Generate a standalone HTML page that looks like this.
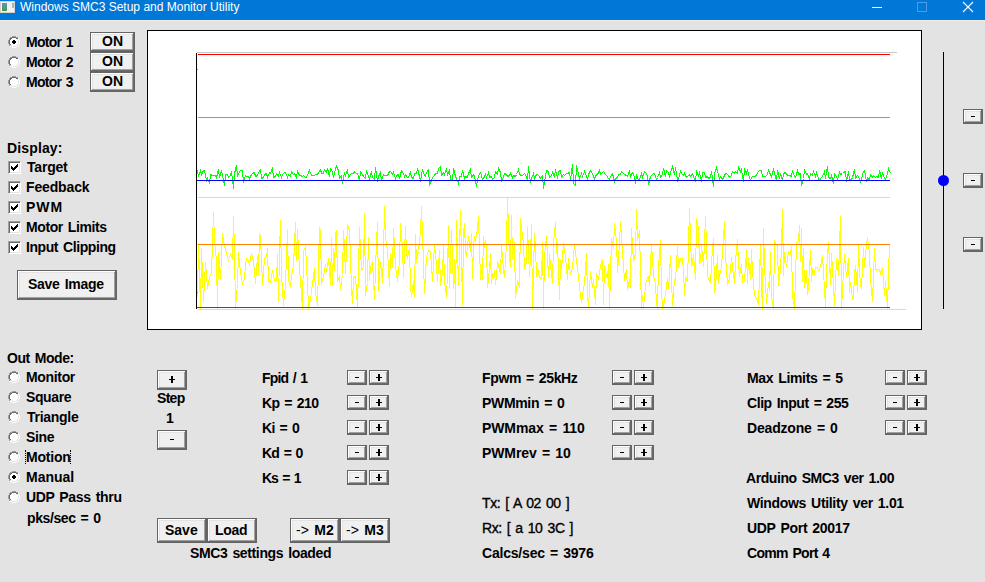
<!DOCTYPE html>
<html><head><meta charset="utf-8"><style>
html,body{margin:0;padding:0}
body{width:985px;height:582px;overflow:hidden;position:relative;background:#e3e3e3;font-family:"Liberation Sans",sans-serif}
#title{position:absolute;left:0;top:0;width:985px;height:20px;background:#0078d7}
#tline{position:absolute;left:0;top:20px;width:985px;height:1px;background:#f0ebe7}
#icon{position:absolute;left:0;top:1px;width:15px;height:12px;background:#f2f2f2;box-shadow:inset 0 0 0 1px #d9d2cc}
#icon .i1{position:absolute;left:2px;top:2px;width:5px;height:8px;background:linear-gradient(#6a8fb8,#3fa04a)}
#icon .i3{position:absolute;left:12px;top:2px;width:2px;height:5px;background:linear-gradient(#8fb0d8,#9cd09c)}
.t{position:absolute;white-space:nowrap;font-size:14px;line-height:14px;color:#000;word-spacing:1.5px}
.b{position:absolute;box-sizing:border-box;background:#f0f0f0;border:1px solid #646464;box-shadow:inset -1px -1px 0 #696969,inset 1px 1px 0 #fff,inset -2px -2px 0 #a0a0a0,inset 2px 2px 0 #e3e3e3}
.g{position:absolute;background:#000}
.b.thin{box-shadow:inset 1px 1px 0 #fff,inset -1px -1px 0 #8e8e8e}
.b span{display:block;line-height:13px}
.b.sm{font-size:12px}
.rd{position:absolute}
.cb{position:absolute;width:13px;height:13px;box-sizing:border-box;background:#fff;border-top:1px solid #a0a0a0;border-left:1px solid #a0a0a0;border-right:1px solid #fff;border-bottom:1px solid #fff;box-shadow:inset 1px 1px 0 #696969,inset -1px -1px 0 #e3e3e3}
</style></head><body>
<svg id="chart" width="985" height="582" style="position:absolute;left:0;top:0" shape-rendering="crispEdges">
<rect x="147.5" y="30.5" width="774" height="299" fill="#fff" stroke="#000" stroke-width="1"/>
<line x1="197" y1="52.5" x2="897" y2="52.5" stroke="#c8c8c8"/>
<line x1="198" y1="197.5" x2="890" y2="197.5" stroke="#d8d8d8"/>
<line x1="198" y1="309.5" x2="906" y2="309.5" stroke="#d8d8d8"/>
<polyline points="197.5,297.5 198.5,243.5 199.5,274.5 200.5,308.5 201.5,248.5 203.5,301.5 205.5,262.5 207.5,288.5 209.5,277.5 211.5,272.5 213.5,212.5 214.5,241.5 216.5,260.5 217.5,308.5 218.5,252.5 220.5,279.5 222.5,233.5 224.5,245.5 226.5,253.5 228.5,260.5 230.5,254.5 232.5,259.5 233.5,216.5 234.5,250.5 235.5,308.5 237.5,283.5 238.5,252.5 240.5,272.5 242.5,283.5 244.5,278.5 245.5,263.5 246.5,258.5 248.5,260.5 249.5,265.5 251.5,253.5 253.5,261.5 255.5,283.5 257.5,256.5 258.5,274.5 259.5,233.5 260.5,236.5 262.5,284.5 264.5,258.5 266.5,257.5 267.5,248.5 268.5,281.5 270.5,282.5 272.5,270.5 274.5,280.5 276.5,280.5 277.5,254.5 278.5,301.5 279.5,252.5 280.5,220.5 281.5,274.5 283.5,305.5 285.5,284.5 287.5,229.5 288.5,280.5 290.5,287.5 291.5,275.5 293.5,265.5 295.5,222.5 296.5,260.5 297.5,229.5 299.5,269.5 300.5,280.5 302.5,308.5 303.5,251.5 305.5,246.5 307.5,283.5 308.5,308.5 310.5,299.5 312.5,283.5 314.5,268.5 315.5,292.5 317.5,305.5 319.5,227.5 320.5,230.5 321.5,284.5 323.5,275.5 325.5,264.5 326.5,271.5 328.5,258.5 330.5,284.5 331.5,238.5 332.5,285.5 333.5,248.5 334.5,270.5 335.5,234.5 336.5,230.5 337.5,281.5 339.5,275.5 340.5,289.5 342.5,274.5 343.5,230.5 344.5,247.5 345.5,273.5 347.5,224.5 349.5,230.5 351.5,287.5 352.5,303.5 353.5,277.5 355.5,276.5 357.5,307.5 359.5,227.5 361.5,270.5 363.5,267.5 364.5,213.5 365.5,295.5 367.5,282.5 368.5,237.5 369.5,280.5 370.5,267.5 372.5,261.5 374.5,299.5 376.5,241.5 377.5,222.5 378.5,290.5 380.5,261.5 382.5,283.5 383.5,253.5 384.5,206.5 385.5,237.5 387.5,250.5 388.5,268.5 389.5,286.5 390.5,253.5 392.5,267.5 393.5,228.5 395.5,266.5 397.5,281.5 399.5,261.5 400.5,223.5 402.5,247.5 403.5,277.5 405.5,226.5 406.5,253.5 407.5,258.5 408.5,252.5 409.5,247.5 410.5,286.5 411.5,296.5 413.5,281.5 414.5,297.5 415.5,234.5 416.5,262.5 418.5,250.5 420.5,231.5 421.5,206.5 423.5,263.5 424.5,293.5 426.5,256.5 428.5,250.5 430.5,251.5 432.5,281.5 434.5,244.5 436.5,265.5 437.5,281.5 439.5,250.5 440.5,285.5 442.5,273.5 443.5,244.5 444.5,280.5 446.5,297.5 447.5,272.5 448.5,225.5 449.5,288.5 451.5,230.5 453.5,288.5 454.5,259.5 455.5,307.5 456.5,220.5 458.5,285.5 460.5,210.5 462.5,304.5 463.5,233.5 464.5,223.5 465.5,252.5 466.5,256.5 468.5,236.5 470.5,251.5 471.5,233.5 472.5,278.5 473.5,245.5 474.5,236.5 475.5,241.5 477.5,227.5 478.5,216.5 480.5,279.5 481.5,269.5 482.5,279.5 483.5,236.5 484.5,247.5 485.5,240.5 486.5,246.5 487.5,287.5 489.5,268.5 490.5,253.5 491.5,283.5 492.5,274.5 493.5,276.5 494.5,270.5 495.5,284.5 496.5,276.5 497.5,261.5 498.5,265.5 500.5,273.5 501.5,244.5 503.5,269.5 504.5,277.5 506.5,242.5 507.5,198.5 509.5,258.5 510.5,266.5 511.5,215.5 512.5,258.5 514.5,241.5 515.5,298.5 517.5,280.5 519.5,287.5 520.5,218.5 521.5,228.5 523.5,243.5 524.5,269.5 526.5,261.5 527.5,227.5 529.5,276.5 530.5,254.5 531.5,224.5 532.5,308.5 534.5,233.5 535.5,247.5 536.5,276.5 537.5,267.5 539.5,277.5 541.5,278.5 542.5,242.5 543.5,308.5 544.5,256.5 546.5,236.5 548.5,277.5 549.5,254.5 550.5,263.5 552.5,283.5 553.5,242.5 555.5,222.5 556.5,252.5 557.5,242.5 559.5,299.5 560.5,260.5 561.5,269.5 563.5,243.5 565.5,256.5 566.5,268.5 567.5,279.5 568.5,258.5 570.5,274.5 572.5,267.5 574.5,244.5 575.5,252.5 577.5,268.5 579.5,286.5 581.5,302.5 583.5,288.5 584.5,283.5 586.5,253.5 587.5,294.5 588.5,307.5 590.5,271.5 592.5,287.5 593.5,279.5 595.5,304.5 596.5,273.5 598.5,279.5 600.5,265.5 602.5,259.5 603.5,304.5 604.5,265.5 606.5,275.5 607.5,278.5 608.5,264.5 609.5,308.5 610.5,274.5 611.5,238.5 613.5,248.5 614.5,223.5 616.5,241.5 617.5,272.5 619.5,242.5 620.5,221.5 622.5,251.5 624.5,280.5 626.5,269.5 627.5,289.5 629.5,279.5 630.5,287.5 631.5,228.5 633.5,261.5 635.5,253.5 636.5,209.5 637.5,240.5 639.5,230.5 641.5,308.5 642.5,295.5 643.5,308.5 645.5,285.5 646.5,279.5 648.5,276.5 649.5,285.5 651.5,244.5 653.5,275.5 655.5,283.5 656.5,303.5 657.5,308.5 658.5,265.5 660.5,240.5 661.5,289.5 662.5,308.5 664.5,300.5 666.5,286.5 667.5,278.5 668.5,288.5 669.5,273.5 670.5,255.5 672.5,305.5 674.5,279.5 675.5,280.5 677.5,246.5 678.5,266.5 680.5,258.5 682.5,258.5 683.5,270.5 684.5,295.5 685.5,277.5 687.5,281.5 689.5,208.5 691.5,266.5 692.5,262.5 693.5,254.5 695.5,279.5 696.5,218.5 698.5,228.5 699.5,263.5 700.5,261.5 701.5,245.5 703.5,266.5 705.5,216.5 707.5,274.5 708.5,279.5 710.5,282.5 711.5,265.5 712.5,247.5 713.5,238.5 714.5,292.5 715.5,287.5 717.5,255.5 718.5,283.5 719.5,273.5 720.5,273.5 722.5,254.5 724.5,221.5 725.5,255.5 727.5,283.5 729.5,279.5 731.5,257.5 732.5,266.5 734.5,283.5 735.5,260.5 737.5,239.5 738.5,262.5 739.5,276.5 741.5,264.5 742.5,282.5 744.5,280.5 746.5,250.5 747.5,283.5 748.5,257.5 750.5,279.5 751.5,249.5 752.5,272.5 754.5,295.5 756.5,298.5 758.5,304.5 760.5,244.5 761.5,286.5 762.5,308.5 763.5,228.5 764.5,267.5 765.5,284.5 766.5,303.5 768.5,282.5 769.5,290.5 770.5,251.5 771.5,297.5 773.5,308.5 774.5,240.5 775.5,244.5 777.5,245.5 778.5,285.5 780.5,268.5 781.5,248.5 782.5,209.5 783.5,275.5 784.5,252.5 786.5,266.5 788.5,251.5 790.5,254.5 791.5,246.5 792.5,295.5 794.5,308.5 796.5,242.5 798.5,241.5 799.5,225.5 800.5,261.5 801.5,228.5 802.5,281.5 803.5,248.5 804.5,287.5 806.5,270.5 807.5,294.5 808.5,287.5 810.5,250.5 811.5,281.5 812.5,269.5 814.5,273.5 815.5,267.5 817.5,267.5 818.5,270.5 820.5,267.5 822.5,255.5 823.5,271.5 825.5,306.5 826.5,270.5 828.5,242.5 830.5,284.5 831.5,253.5 832.5,268.5 834.5,305.5 836.5,258.5 838.5,275.5 840.5,216.5 841.5,308.5 843.5,272.5 844.5,254.5 846.5,276.5 848.5,258.5 849.5,292.5 850.5,282.5 852.5,299.5 853.5,298.5 854.5,272.5 855.5,265.5 857.5,291.5 858.5,244.5 859.5,271.5 860.5,284.5 861.5,288.5 863.5,247.5 864.5,266.5 865.5,253.5 867.5,237.5 869.5,253.5 870.5,279.5 872.5,301.5 874.5,248.5 875.5,268.5 876.5,270.5 877.5,269.5 879.5,269.5 880.5,273.5 882.5,267.5 884.5,295.5 885.5,281.5 887.5,308.5 888.5,272.5 889.5,245.5" fill="none" stroke="#ffff00" stroke-width="1"/>
<line x1="198" y1="54.5" x2="890" y2="54.5" stroke="#ff0000"/>
<line x1="198" y1="117.5" x2="890" y2="117.5" stroke="#ff8000"/>
<line x1="198" y1="244.5" x2="890" y2="244.5" stroke="#ff8000"/>
<line x1="197" y1="307.5" x2="890" y2="307.5" stroke="#ff0000"/>
<polyline points="197.5,170.5 198.5,176.5 200.5,170.5 201.5,174.5 203.5,170.5 204.5,170.5 206.5,180.5 207.5,178.5 209.5,183.5 210.5,174.5 212.5,175.5 213.5,175.5 215.5,175.5 216.5,177.5 218.5,169.5 219.5,177.5 221.5,170.5 222.5,175.5 224.5,185.5 225.5,174.5 227.5,174.5 228.5,177.5 230.5,175.5 231.5,171.5 233.5,188.5 234.5,173.5 236.5,165.5 237.5,176.5 239.5,171.5 240.5,170.5 242.5,170.5 243.5,182.5 245.5,175.5 246.5,176.5 248.5,176.5 249.5,178.5 251.5,174.5 252.5,173.5 254.5,172.5 255.5,176.5 257.5,175.5 258.5,172.5 260.5,169.5 261.5,178.5 263.5,177.5 264.5,174.5 266.5,173.5 267.5,177.5 269.5,172.5 270.5,173.5 272.5,167.5 273.5,177.5 275.5,176.5 276.5,173.5 278.5,176.5 279.5,172.5 281.5,177.5 282.5,174.5 284.5,172.5 285.5,172.5 287.5,177.5 288.5,174.5 290.5,176.5 291.5,171.5 293.5,174.5 294.5,173.5 296.5,177.5 297.5,171.5 299.5,175.5 300.5,175.5 302.5,176.5 303.5,175.5 305.5,177.5 306.5,177.5 308.5,172.5 309.5,170.5 311.5,175.5 312.5,175.5 314.5,175.5 315.5,174.5 317.5,174.5 318.5,172.5 320.5,169.5 321.5,173.5 323.5,173.5 324.5,169.5 326.5,172.5 327.5,168.5 329.5,176.5 330.5,168.5 332.5,171.5 333.5,177.5 335.5,168.5 336.5,166.5 338.5,170.5 339.5,178.5 341.5,175.5 342.5,183.5 344.5,172.5 345.5,175.5 347.5,169.5 348.5,177.5 350.5,174.5 351.5,173.5 353.5,173.5 354.5,171.5 356.5,173.5 357.5,173.5 359.5,180.5 360.5,171.5 362.5,174.5 363.5,176.5 365.5,178.5 366.5,170.5 368.5,176.5 369.5,178.5 371.5,171.5 372.5,177.5 374.5,179.5 375.5,167.5 377.5,181.5 378.5,176.5 380.5,172.5 381.5,180.5 383.5,174.5 384.5,175.5 386.5,175.5 387.5,175.5 389.5,171.5 390.5,171.5 392.5,174.5 393.5,172.5 395.5,178.5 396.5,175.5 398.5,174.5 399.5,178.5 401.5,170.5 402.5,171.5 404.5,176.5 405.5,174.5 407.5,177.5 408.5,177.5 410.5,171.5 411.5,177.5 413.5,178.5 414.5,173.5 416.5,173.5 417.5,168.5 419.5,176.5 420.5,181.5 422.5,169.5 423.5,173.5 425.5,176.5 426.5,172.5 428.5,169.5 429.5,184.5 431.5,180.5 432.5,177.5 434.5,175.5 435.5,173.5 437.5,173.5 438.5,168.5 440.5,166.5 441.5,175.5 443.5,172.5 444.5,174.5 446.5,168.5 447.5,174.5 449.5,170.5 450.5,179.5 452.5,180.5 453.5,168.5 455.5,176.5 456.5,178.5 458.5,183.5 459.5,176.5 461.5,176.5 462.5,170.5 464.5,178.5 465.5,176.5 467.5,177.5 468.5,173.5 470.5,169.5 471.5,177.5 473.5,174.5 474.5,176.5 476.5,186.5 477.5,179.5 479.5,173.5 480.5,172.5 482.5,179.5 483.5,178.5 485.5,174.5 486.5,177.5 488.5,172.5 489.5,177.5 491.5,176.5 492.5,179.5 494.5,177.5 495.5,171.5 497.5,174.5 498.5,168.5 500.5,172.5 501.5,181.5 503.5,176.5 504.5,173.5 506.5,174.5 507.5,176.5 509.5,175.5 510.5,173.5 512.5,177.5 513.5,175.5 515.5,176.5 516.5,174.5 518.5,169.5 519.5,174.5 521.5,175.5 522.5,175.5 524.5,173.5 525.5,174.5 527.5,180.5 528.5,166.5 530.5,182.5 531.5,178.5 533.5,173.5 534.5,178.5 536.5,174.5 537.5,174.5 539.5,176.5 540.5,178.5 542.5,175.5 543.5,188.5 545.5,176.5 546.5,170.5 548.5,171.5 549.5,177.5 551.5,175.5 552.5,172.5 554.5,176.5 555.5,169.5 557.5,178.5 558.5,171.5 560.5,170.5 561.5,177.5 563.5,174.5 564.5,175.5 566.5,173.5 567.5,173.5 569.5,172.5 570.5,179.5 572.5,164.5 573.5,183.5 575.5,185.5 576.5,165.5 578.5,174.5 579.5,178.5 581.5,173.5 582.5,176.5 584.5,171.5 585.5,173.5 587.5,179.5 588.5,174.5 590.5,170.5 591.5,171.5 593.5,176.5 594.5,178.5 596.5,174.5 597.5,174.5 599.5,170.5 600.5,174.5 602.5,172.5 603.5,171.5 605.5,174.5 606.5,175.5 608.5,178.5 609.5,179.5 611.5,174.5 612.5,173.5 614.5,181.5 615.5,178.5 617.5,177.5 618.5,174.5 620.5,174.5 621.5,171.5 623.5,173.5 624.5,174.5 626.5,175.5 627.5,176.5 629.5,170.5 630.5,176.5 632.5,172.5 633.5,173.5 635.5,183.5 636.5,174.5 638.5,180.5 639.5,179.5 641.5,173.5 642.5,177.5 644.5,171.5 645.5,172.5 647.5,175.5 648.5,184.5 650.5,176.5 651.5,175.5 653.5,173.5 654.5,173.5 656.5,179.5 657.5,177.5 659.5,172.5 660.5,177.5 662.5,174.5 663.5,168.5 665.5,176.5 666.5,170.5 668.5,172.5 669.5,176.5 671.5,169.5 672.5,166.5 674.5,174.5 675.5,167.5 677.5,180.5 678.5,178.5 680.5,171.5 681.5,173.5 683.5,175.5 684.5,173.5 686.5,177.5 687.5,176.5 689.5,174.5 690.5,176.5 692.5,173.5 693.5,176.5 695.5,181.5 696.5,171.5 698.5,175.5 699.5,172.5 701.5,181.5 702.5,172.5 704.5,172.5 705.5,177.5 707.5,176.5 708.5,178.5 710.5,177.5 711.5,171.5 713.5,186.5 714.5,173.5 716.5,167.5 717.5,171.5 719.5,178.5 720.5,176.5 722.5,179.5 723.5,177.5 725.5,173.5 726.5,173.5 728.5,175.5 729.5,177.5 731.5,175.5 732.5,171.5 734.5,173.5 735.5,171.5 737.5,173.5 738.5,167.5 740.5,171.5 741.5,169.5 743.5,181.5 744.5,169.5 746.5,173.5 747.5,169.5 749.5,178.5 750.5,179.5 752.5,176.5 753.5,176.5 755.5,176.5 756.5,174.5 758.5,171.5 759.5,170.5 761.5,170.5 762.5,176.5 764.5,176.5 765.5,176.5 767.5,174.5 768.5,170.5 770.5,174.5 771.5,176.5 773.5,169.5 774.5,173.5 776.5,180.5 777.5,170.5 779.5,178.5 780.5,173.5 782.5,180.5 783.5,173.5 785.5,172.5 786.5,174.5 788.5,175.5 789.5,175.5 791.5,176.5 792.5,170.5 794.5,176.5 795.5,177.5 797.5,170.5 798.5,174.5 800.5,173.5 801.5,185.5 803.5,178.5 804.5,169.5 806.5,174.5 807.5,173.5 809.5,179.5 810.5,173.5 812.5,175.5 813.5,171.5 815.5,176.5 816.5,172.5 818.5,178.5 819.5,180.5 821.5,177.5 822.5,176.5 824.5,171.5 825.5,178.5 827.5,166.5 828.5,177.5 830.5,178.5 831.5,175.5 833.5,183.5 834.5,173.5 836.5,176.5 837.5,179.5 839.5,172.5 840.5,174.5 842.5,173.5 843.5,172.5 845.5,171.5 846.5,181.5 848.5,171.5 849.5,180.5 851.5,179.5 852.5,177.5 854.5,169.5 855.5,178.5 857.5,175.5 858.5,176.5 860.5,181.5 861.5,178.5 863.5,171.5 864.5,170.5 866.5,181.5 867.5,177.5 869.5,180.5 870.5,174.5 872.5,177.5 873.5,175.5 875.5,177.5 876.5,176.5 878.5,177.5 879.5,170.5 881.5,178.5 882.5,172.5 884.5,178.5 885.5,179.5 887.5,173.5 888.5,168.5 890.5,173.5" fill="none" stroke="#00ff00" stroke-width="1"/>
<line x1="197" y1="180.5" x2="890" y2="180.5" stroke="#0000ff"/>
<line x1="196.5" y1="53" x2="196.5" y2="309" stroke="#000"/>
<rect x="197" y="69" width="1" height="1" fill="#ff8000"/><rect x="197" y="292" width="1" height="1" fill="#ff8000"/>
<line x1="943.5" y1="52" x2="943.5" y2="309" stroke="#000"/>
<circle cx="943.5" cy="180.5" r="5.5" fill="#0000ff" shape-rendering="auto"/>
</svg>
<div id="title"></div><div id="tline"></div><div id="icon"><div class="i1"></div><div class="i2"></div><div class="i3"></div></div><div class="t" id="ttext" style="left:20px;top:-3px;font-weight:normal;color:#fff;font-size:12px;line-height:20px;word-spacing:0">Windows SMC3 Setup and Monitor Utility</div><svg id="ctrl" width="985" height="20" style="position:absolute;left:0;top:0">
<line x1="872" y1="7.5" x2="882" y2="7.5" stroke="#fff" stroke-width="1"/>
<rect x="917.5" y="2.5" width="9" height="9" fill="none" stroke="#4f9ce6" stroke-width="1"/>
<path d="M963 2 L973 12 M973 2 L963 12" stroke="#fff" stroke-width="1.1"/>
</svg><svg class="rd" style="left:8px;top:36px" width="12" height="12" shape-rendering="crispEdges"><rect x="4" y="2" width="1" height="1" fill="#fff"/><rect x="5" y="2" width="1" height="1" fill="#fff"/><rect x="6" y="2" width="1" height="1" fill="#fff"/><rect x="7" y="2" width="1" height="1" fill="#fff"/><rect x="3" y="3" width="1" height="1" fill="#fff"/><rect x="4" y="3" width="1" height="1" fill="#fff"/><rect x="5" y="3" width="1" height="1" fill="#fff"/><rect x="6" y="3" width="1" height="1" fill="#fff"/><rect x="7" y="3" width="1" height="1" fill="#fff"/><rect x="8" y="3" width="1" height="1" fill="#fff"/><rect x="2" y="4" width="1" height="1" fill="#fff"/><rect x="3" y="4" width="1" height="1" fill="#fff"/><rect x="4" y="4" width="1" height="1" fill="#fff"/><rect x="5" y="4" width="1" height="1" fill="#fff"/><rect x="6" y="4" width="1" height="1" fill="#fff"/><rect x="7" y="4" width="1" height="1" fill="#fff"/><rect x="8" y="4" width="1" height="1" fill="#fff"/><rect x="9" y="4" width="1" height="1" fill="#fff"/><rect x="2" y="5" width="1" height="1" fill="#fff"/><rect x="3" y="5" width="1" height="1" fill="#fff"/><rect x="4" y="5" width="1" height="1" fill="#fff"/><rect x="5" y="5" width="1" height="1" fill="#fff"/><rect x="6" y="5" width="1" height="1" fill="#fff"/><rect x="7" y="5" width="1" height="1" fill="#fff"/><rect x="8" y="5" width="1" height="1" fill="#fff"/><rect x="9" y="5" width="1" height="1" fill="#fff"/><rect x="2" y="6" width="1" height="1" fill="#fff"/><rect x="3" y="6" width="1" height="1" fill="#fff"/><rect x="4" y="6" width="1" height="1" fill="#fff"/><rect x="5" y="6" width="1" height="1" fill="#fff"/><rect x="6" y="6" width="1" height="1" fill="#fff"/><rect x="7" y="6" width="1" height="1" fill="#fff"/><rect x="8" y="6" width="1" height="1" fill="#fff"/><rect x="9" y="6" width="1" height="1" fill="#fff"/><rect x="2" y="7" width="1" height="1" fill="#fff"/><rect x="3" y="7" width="1" height="1" fill="#fff"/><rect x="4" y="7" width="1" height="1" fill="#fff"/><rect x="5" y="7" width="1" height="1" fill="#fff"/><rect x="6" y="7" width="1" height="1" fill="#fff"/><rect x="7" y="7" width="1" height="1" fill="#fff"/><rect x="8" y="7" width="1" height="1" fill="#fff"/><rect x="9" y="7" width="1" height="1" fill="#fff"/><rect x="3" y="8" width="1" height="1" fill="#fff"/><rect x="4" y="8" width="1" height="1" fill="#fff"/><rect x="5" y="8" width="1" height="1" fill="#fff"/><rect x="6" y="8" width="1" height="1" fill="#fff"/><rect x="7" y="8" width="1" height="1" fill="#fff"/><rect x="8" y="8" width="1" height="1" fill="#fff"/><rect x="4" y="9" width="1" height="1" fill="#fff"/><rect x="5" y="9" width="1" height="1" fill="#fff"/><rect x="6" y="9" width="1" height="1" fill="#fff"/><rect x="7" y="9" width="1" height="1" fill="#fff"/><rect x="4" y="0" width="1" height="1" fill="#a0a0a0"/><rect x="5" y="0" width="1" height="1" fill="#a0a0a0"/><rect x="6" y="0" width="1" height="1" fill="#a0a0a0"/><rect x="7" y="0" width="1" height="1" fill="#a0a0a0"/><rect x="2" y="1" width="1" height="1" fill="#a0a0a0"/><rect x="3" y="1" width="1" height="1" fill="#a0a0a0"/><rect x="8" y="1" width="1" height="1" fill="#a0a0a0"/><rect x="9" y="1" width="1" height="1" fill="#a0a0a0"/><rect x="1" y="2" width="1" height="1" fill="#a0a0a0"/><rect x="1" y="3" width="1" height="1" fill="#a0a0a0"/><rect x="0" y="4" width="1" height="1" fill="#a0a0a0"/><rect x="0" y="5" width="1" height="1" fill="#a0a0a0"/><rect x="0" y="6" width="1" height="1" fill="#a0a0a0"/><rect x="0" y="7" width="1" height="1" fill="#a0a0a0"/><rect x="1" y="8" width="1" height="1" fill="#a0a0a0"/><rect x="1" y="9" width="1" height="1" fill="#a0a0a0"/><rect x="4" y="1" width="1" height="1" fill="#696969"/><rect x="5" y="1" width="1" height="1" fill="#696969"/><rect x="6" y="1" width="1" height="1" fill="#696969"/><rect x="7" y="1" width="1" height="1" fill="#696969"/><rect x="2" y="2" width="1" height="1" fill="#696969"/><rect x="3" y="2" width="1" height="1" fill="#696969"/><rect x="8" y="2" width="1" height="1" fill="#696969"/><rect x="9" y="2" width="1" height="1" fill="#696969"/><rect x="2" y="3" width="1" height="1" fill="#696969"/><rect x="1" y="4" width="1" height="1" fill="#696969"/><rect x="1" y="5" width="1" height="1" fill="#696969"/><rect x="1" y="6" width="1" height="1" fill="#696969"/><rect x="1" y="7" width="1" height="1" fill="#696969"/><rect x="2" y="8" width="1" height="1" fill="#696969"/><rect x="10" y="2" width="1" height="1" fill="#fff"/><rect x="10" y="3" width="1" height="1" fill="#fff"/><rect x="11" y="4" width="1" height="1" fill="#fff"/><rect x="11" y="5" width="1" height="1" fill="#fff"/><rect x="11" y="6" width="1" height="1" fill="#fff"/><rect x="11" y="7" width="1" height="1" fill="#fff"/><rect x="10" y="8" width="1" height="1" fill="#fff"/><rect x="10" y="9" width="1" height="1" fill="#fff"/><rect x="2" y="10" width="1" height="1" fill="#fff"/><rect x="3" y="10" width="1" height="1" fill="#fff"/><rect x="8" y="10" width="1" height="1" fill="#fff"/><rect x="9" y="10" width="1" height="1" fill="#fff"/><rect x="4" y="11" width="1" height="1" fill="#fff"/><rect x="5" y="11" width="1" height="1" fill="#fff"/><rect x="6" y="11" width="1" height="1" fill="#fff"/><rect x="7" y="11" width="1" height="1" fill="#fff"/><rect x="9" y="3" width="1" height="1" fill="#e3e3e3"/><rect x="10" y="4" width="1" height="1" fill="#e3e3e3"/><rect x="10" y="5" width="1" height="1" fill="#e3e3e3"/><rect x="10" y="6" width="1" height="1" fill="#e3e3e3"/><rect x="10" y="7" width="1" height="1" fill="#e3e3e3"/><rect x="9" y="8" width="1" height="1" fill="#e3e3e3"/><rect x="2" y="9" width="1" height="1" fill="#e3e3e3"/><rect x="3" y="9" width="1" height="1" fill="#e3e3e3"/><rect x="8" y="9" width="1" height="1" fill="#e3e3e3"/><rect x="9" y="9" width="1" height="1" fill="#e3e3e3"/><rect x="4" y="10" width="1" height="1" fill="#e3e3e3"/><rect x="5" y="10" width="1" height="1" fill="#e3e3e3"/><rect x="6" y="10" width="1" height="1" fill="#e3e3e3"/><rect x="7" y="10" width="1" height="1" fill="#e3e3e3"/><rect x="5" y="4" width="1" height="1" fill="#000"/><rect x="6" y="4" width="1" height="1" fill="#000"/><rect x="4" y="5" width="1" height="1" fill="#000"/><rect x="5" y="5" width="1" height="1" fill="#000"/><rect x="6" y="5" width="1" height="1" fill="#000"/><rect x="7" y="5" width="1" height="1" fill="#000"/><rect x="4" y="6" width="1" height="1" fill="#000"/><rect x="5" y="6" width="1" height="1" fill="#000"/><rect x="6" y="6" width="1" height="1" fill="#000"/><rect x="7" y="6" width="1" height="1" fill="#000"/><rect x="5" y="7" width="1" height="1" fill="#000"/><rect x="6" y="7" width="1" height="1" fill="#000"/></svg><svg class="rd" style="left:8px;top:56px" width="12" height="12" shape-rendering="crispEdges"><rect x="4" y="2" width="1" height="1" fill="#fff"/><rect x="5" y="2" width="1" height="1" fill="#fff"/><rect x="6" y="2" width="1" height="1" fill="#fff"/><rect x="7" y="2" width="1" height="1" fill="#fff"/><rect x="3" y="3" width="1" height="1" fill="#fff"/><rect x="4" y="3" width="1" height="1" fill="#fff"/><rect x="5" y="3" width="1" height="1" fill="#fff"/><rect x="6" y="3" width="1" height="1" fill="#fff"/><rect x="7" y="3" width="1" height="1" fill="#fff"/><rect x="8" y="3" width="1" height="1" fill="#fff"/><rect x="2" y="4" width="1" height="1" fill="#fff"/><rect x="3" y="4" width="1" height="1" fill="#fff"/><rect x="4" y="4" width="1" height="1" fill="#fff"/><rect x="5" y="4" width="1" height="1" fill="#fff"/><rect x="6" y="4" width="1" height="1" fill="#fff"/><rect x="7" y="4" width="1" height="1" fill="#fff"/><rect x="8" y="4" width="1" height="1" fill="#fff"/><rect x="9" y="4" width="1" height="1" fill="#fff"/><rect x="2" y="5" width="1" height="1" fill="#fff"/><rect x="3" y="5" width="1" height="1" fill="#fff"/><rect x="4" y="5" width="1" height="1" fill="#fff"/><rect x="5" y="5" width="1" height="1" fill="#fff"/><rect x="6" y="5" width="1" height="1" fill="#fff"/><rect x="7" y="5" width="1" height="1" fill="#fff"/><rect x="8" y="5" width="1" height="1" fill="#fff"/><rect x="9" y="5" width="1" height="1" fill="#fff"/><rect x="2" y="6" width="1" height="1" fill="#fff"/><rect x="3" y="6" width="1" height="1" fill="#fff"/><rect x="4" y="6" width="1" height="1" fill="#fff"/><rect x="5" y="6" width="1" height="1" fill="#fff"/><rect x="6" y="6" width="1" height="1" fill="#fff"/><rect x="7" y="6" width="1" height="1" fill="#fff"/><rect x="8" y="6" width="1" height="1" fill="#fff"/><rect x="9" y="6" width="1" height="1" fill="#fff"/><rect x="2" y="7" width="1" height="1" fill="#fff"/><rect x="3" y="7" width="1" height="1" fill="#fff"/><rect x="4" y="7" width="1" height="1" fill="#fff"/><rect x="5" y="7" width="1" height="1" fill="#fff"/><rect x="6" y="7" width="1" height="1" fill="#fff"/><rect x="7" y="7" width="1" height="1" fill="#fff"/><rect x="8" y="7" width="1" height="1" fill="#fff"/><rect x="9" y="7" width="1" height="1" fill="#fff"/><rect x="3" y="8" width="1" height="1" fill="#fff"/><rect x="4" y="8" width="1" height="1" fill="#fff"/><rect x="5" y="8" width="1" height="1" fill="#fff"/><rect x="6" y="8" width="1" height="1" fill="#fff"/><rect x="7" y="8" width="1" height="1" fill="#fff"/><rect x="8" y="8" width="1" height="1" fill="#fff"/><rect x="4" y="9" width="1" height="1" fill="#fff"/><rect x="5" y="9" width="1" height="1" fill="#fff"/><rect x="6" y="9" width="1" height="1" fill="#fff"/><rect x="7" y="9" width="1" height="1" fill="#fff"/><rect x="4" y="0" width="1" height="1" fill="#a0a0a0"/><rect x="5" y="0" width="1" height="1" fill="#a0a0a0"/><rect x="6" y="0" width="1" height="1" fill="#a0a0a0"/><rect x="7" y="0" width="1" height="1" fill="#a0a0a0"/><rect x="2" y="1" width="1" height="1" fill="#a0a0a0"/><rect x="3" y="1" width="1" height="1" fill="#a0a0a0"/><rect x="8" y="1" width="1" height="1" fill="#a0a0a0"/><rect x="9" y="1" width="1" height="1" fill="#a0a0a0"/><rect x="1" y="2" width="1" height="1" fill="#a0a0a0"/><rect x="1" y="3" width="1" height="1" fill="#a0a0a0"/><rect x="0" y="4" width="1" height="1" fill="#a0a0a0"/><rect x="0" y="5" width="1" height="1" fill="#a0a0a0"/><rect x="0" y="6" width="1" height="1" fill="#a0a0a0"/><rect x="0" y="7" width="1" height="1" fill="#a0a0a0"/><rect x="1" y="8" width="1" height="1" fill="#a0a0a0"/><rect x="1" y="9" width="1" height="1" fill="#a0a0a0"/><rect x="4" y="1" width="1" height="1" fill="#696969"/><rect x="5" y="1" width="1" height="1" fill="#696969"/><rect x="6" y="1" width="1" height="1" fill="#696969"/><rect x="7" y="1" width="1" height="1" fill="#696969"/><rect x="2" y="2" width="1" height="1" fill="#696969"/><rect x="3" y="2" width="1" height="1" fill="#696969"/><rect x="8" y="2" width="1" height="1" fill="#696969"/><rect x="9" y="2" width="1" height="1" fill="#696969"/><rect x="2" y="3" width="1" height="1" fill="#696969"/><rect x="1" y="4" width="1" height="1" fill="#696969"/><rect x="1" y="5" width="1" height="1" fill="#696969"/><rect x="1" y="6" width="1" height="1" fill="#696969"/><rect x="1" y="7" width="1" height="1" fill="#696969"/><rect x="2" y="8" width="1" height="1" fill="#696969"/><rect x="10" y="2" width="1" height="1" fill="#fff"/><rect x="10" y="3" width="1" height="1" fill="#fff"/><rect x="11" y="4" width="1" height="1" fill="#fff"/><rect x="11" y="5" width="1" height="1" fill="#fff"/><rect x="11" y="6" width="1" height="1" fill="#fff"/><rect x="11" y="7" width="1" height="1" fill="#fff"/><rect x="10" y="8" width="1" height="1" fill="#fff"/><rect x="10" y="9" width="1" height="1" fill="#fff"/><rect x="2" y="10" width="1" height="1" fill="#fff"/><rect x="3" y="10" width="1" height="1" fill="#fff"/><rect x="8" y="10" width="1" height="1" fill="#fff"/><rect x="9" y="10" width="1" height="1" fill="#fff"/><rect x="4" y="11" width="1" height="1" fill="#fff"/><rect x="5" y="11" width="1" height="1" fill="#fff"/><rect x="6" y="11" width="1" height="1" fill="#fff"/><rect x="7" y="11" width="1" height="1" fill="#fff"/><rect x="9" y="3" width="1" height="1" fill="#e3e3e3"/><rect x="10" y="4" width="1" height="1" fill="#e3e3e3"/><rect x="10" y="5" width="1" height="1" fill="#e3e3e3"/><rect x="10" y="6" width="1" height="1" fill="#e3e3e3"/><rect x="10" y="7" width="1" height="1" fill="#e3e3e3"/><rect x="9" y="8" width="1" height="1" fill="#e3e3e3"/><rect x="2" y="9" width="1" height="1" fill="#e3e3e3"/><rect x="3" y="9" width="1" height="1" fill="#e3e3e3"/><rect x="8" y="9" width="1" height="1" fill="#e3e3e3"/><rect x="9" y="9" width="1" height="1" fill="#e3e3e3"/><rect x="4" y="10" width="1" height="1" fill="#e3e3e3"/><rect x="5" y="10" width="1" height="1" fill="#e3e3e3"/><rect x="6" y="10" width="1" height="1" fill="#e3e3e3"/><rect x="7" y="10" width="1" height="1" fill="#e3e3e3"/></svg><svg class="rd" style="left:8px;top:76px" width="12" height="12" shape-rendering="crispEdges"><rect x="4" y="2" width="1" height="1" fill="#fff"/><rect x="5" y="2" width="1" height="1" fill="#fff"/><rect x="6" y="2" width="1" height="1" fill="#fff"/><rect x="7" y="2" width="1" height="1" fill="#fff"/><rect x="3" y="3" width="1" height="1" fill="#fff"/><rect x="4" y="3" width="1" height="1" fill="#fff"/><rect x="5" y="3" width="1" height="1" fill="#fff"/><rect x="6" y="3" width="1" height="1" fill="#fff"/><rect x="7" y="3" width="1" height="1" fill="#fff"/><rect x="8" y="3" width="1" height="1" fill="#fff"/><rect x="2" y="4" width="1" height="1" fill="#fff"/><rect x="3" y="4" width="1" height="1" fill="#fff"/><rect x="4" y="4" width="1" height="1" fill="#fff"/><rect x="5" y="4" width="1" height="1" fill="#fff"/><rect x="6" y="4" width="1" height="1" fill="#fff"/><rect x="7" y="4" width="1" height="1" fill="#fff"/><rect x="8" y="4" width="1" height="1" fill="#fff"/><rect x="9" y="4" width="1" height="1" fill="#fff"/><rect x="2" y="5" width="1" height="1" fill="#fff"/><rect x="3" y="5" width="1" height="1" fill="#fff"/><rect x="4" y="5" width="1" height="1" fill="#fff"/><rect x="5" y="5" width="1" height="1" fill="#fff"/><rect x="6" y="5" width="1" height="1" fill="#fff"/><rect x="7" y="5" width="1" height="1" fill="#fff"/><rect x="8" y="5" width="1" height="1" fill="#fff"/><rect x="9" y="5" width="1" height="1" fill="#fff"/><rect x="2" y="6" width="1" height="1" fill="#fff"/><rect x="3" y="6" width="1" height="1" fill="#fff"/><rect x="4" y="6" width="1" height="1" fill="#fff"/><rect x="5" y="6" width="1" height="1" fill="#fff"/><rect x="6" y="6" width="1" height="1" fill="#fff"/><rect x="7" y="6" width="1" height="1" fill="#fff"/><rect x="8" y="6" width="1" height="1" fill="#fff"/><rect x="9" y="6" width="1" height="1" fill="#fff"/><rect x="2" y="7" width="1" height="1" fill="#fff"/><rect x="3" y="7" width="1" height="1" fill="#fff"/><rect x="4" y="7" width="1" height="1" fill="#fff"/><rect x="5" y="7" width="1" height="1" fill="#fff"/><rect x="6" y="7" width="1" height="1" fill="#fff"/><rect x="7" y="7" width="1" height="1" fill="#fff"/><rect x="8" y="7" width="1" height="1" fill="#fff"/><rect x="9" y="7" width="1" height="1" fill="#fff"/><rect x="3" y="8" width="1" height="1" fill="#fff"/><rect x="4" y="8" width="1" height="1" fill="#fff"/><rect x="5" y="8" width="1" height="1" fill="#fff"/><rect x="6" y="8" width="1" height="1" fill="#fff"/><rect x="7" y="8" width="1" height="1" fill="#fff"/><rect x="8" y="8" width="1" height="1" fill="#fff"/><rect x="4" y="9" width="1" height="1" fill="#fff"/><rect x="5" y="9" width="1" height="1" fill="#fff"/><rect x="6" y="9" width="1" height="1" fill="#fff"/><rect x="7" y="9" width="1" height="1" fill="#fff"/><rect x="4" y="0" width="1" height="1" fill="#a0a0a0"/><rect x="5" y="0" width="1" height="1" fill="#a0a0a0"/><rect x="6" y="0" width="1" height="1" fill="#a0a0a0"/><rect x="7" y="0" width="1" height="1" fill="#a0a0a0"/><rect x="2" y="1" width="1" height="1" fill="#a0a0a0"/><rect x="3" y="1" width="1" height="1" fill="#a0a0a0"/><rect x="8" y="1" width="1" height="1" fill="#a0a0a0"/><rect x="9" y="1" width="1" height="1" fill="#a0a0a0"/><rect x="1" y="2" width="1" height="1" fill="#a0a0a0"/><rect x="1" y="3" width="1" height="1" fill="#a0a0a0"/><rect x="0" y="4" width="1" height="1" fill="#a0a0a0"/><rect x="0" y="5" width="1" height="1" fill="#a0a0a0"/><rect x="0" y="6" width="1" height="1" fill="#a0a0a0"/><rect x="0" y="7" width="1" height="1" fill="#a0a0a0"/><rect x="1" y="8" width="1" height="1" fill="#a0a0a0"/><rect x="1" y="9" width="1" height="1" fill="#a0a0a0"/><rect x="4" y="1" width="1" height="1" fill="#696969"/><rect x="5" y="1" width="1" height="1" fill="#696969"/><rect x="6" y="1" width="1" height="1" fill="#696969"/><rect x="7" y="1" width="1" height="1" fill="#696969"/><rect x="2" y="2" width="1" height="1" fill="#696969"/><rect x="3" y="2" width="1" height="1" fill="#696969"/><rect x="8" y="2" width="1" height="1" fill="#696969"/><rect x="9" y="2" width="1" height="1" fill="#696969"/><rect x="2" y="3" width="1" height="1" fill="#696969"/><rect x="1" y="4" width="1" height="1" fill="#696969"/><rect x="1" y="5" width="1" height="1" fill="#696969"/><rect x="1" y="6" width="1" height="1" fill="#696969"/><rect x="1" y="7" width="1" height="1" fill="#696969"/><rect x="2" y="8" width="1" height="1" fill="#696969"/><rect x="10" y="2" width="1" height="1" fill="#fff"/><rect x="10" y="3" width="1" height="1" fill="#fff"/><rect x="11" y="4" width="1" height="1" fill="#fff"/><rect x="11" y="5" width="1" height="1" fill="#fff"/><rect x="11" y="6" width="1" height="1" fill="#fff"/><rect x="11" y="7" width="1" height="1" fill="#fff"/><rect x="10" y="8" width="1" height="1" fill="#fff"/><rect x="10" y="9" width="1" height="1" fill="#fff"/><rect x="2" y="10" width="1" height="1" fill="#fff"/><rect x="3" y="10" width="1" height="1" fill="#fff"/><rect x="8" y="10" width="1" height="1" fill="#fff"/><rect x="9" y="10" width="1" height="1" fill="#fff"/><rect x="4" y="11" width="1" height="1" fill="#fff"/><rect x="5" y="11" width="1" height="1" fill="#fff"/><rect x="6" y="11" width="1" height="1" fill="#fff"/><rect x="7" y="11" width="1" height="1" fill="#fff"/><rect x="9" y="3" width="1" height="1" fill="#e3e3e3"/><rect x="10" y="4" width="1" height="1" fill="#e3e3e3"/><rect x="10" y="5" width="1" height="1" fill="#e3e3e3"/><rect x="10" y="6" width="1" height="1" fill="#e3e3e3"/><rect x="10" y="7" width="1" height="1" fill="#e3e3e3"/><rect x="9" y="8" width="1" height="1" fill="#e3e3e3"/><rect x="2" y="9" width="1" height="1" fill="#e3e3e3"/><rect x="3" y="9" width="1" height="1" fill="#e3e3e3"/><rect x="8" y="9" width="1" height="1" fill="#e3e3e3"/><rect x="9" y="9" width="1" height="1" fill="#e3e3e3"/><rect x="4" y="10" width="1" height="1" fill="#e3e3e3"/><rect x="5" y="10" width="1" height="1" fill="#e3e3e3"/><rect x="6" y="10" width="1" height="1" fill="#e3e3e3"/><rect x="7" y="10" width="1" height="1" fill="#e3e3e3"/></svg><svg class="rd" style="left:8px;top:371px" width="12" height="12" shape-rendering="crispEdges"><rect x="4" y="2" width="1" height="1" fill="#fff"/><rect x="5" y="2" width="1" height="1" fill="#fff"/><rect x="6" y="2" width="1" height="1" fill="#fff"/><rect x="7" y="2" width="1" height="1" fill="#fff"/><rect x="3" y="3" width="1" height="1" fill="#fff"/><rect x="4" y="3" width="1" height="1" fill="#fff"/><rect x="5" y="3" width="1" height="1" fill="#fff"/><rect x="6" y="3" width="1" height="1" fill="#fff"/><rect x="7" y="3" width="1" height="1" fill="#fff"/><rect x="8" y="3" width="1" height="1" fill="#fff"/><rect x="2" y="4" width="1" height="1" fill="#fff"/><rect x="3" y="4" width="1" height="1" fill="#fff"/><rect x="4" y="4" width="1" height="1" fill="#fff"/><rect x="5" y="4" width="1" height="1" fill="#fff"/><rect x="6" y="4" width="1" height="1" fill="#fff"/><rect x="7" y="4" width="1" height="1" fill="#fff"/><rect x="8" y="4" width="1" height="1" fill="#fff"/><rect x="9" y="4" width="1" height="1" fill="#fff"/><rect x="2" y="5" width="1" height="1" fill="#fff"/><rect x="3" y="5" width="1" height="1" fill="#fff"/><rect x="4" y="5" width="1" height="1" fill="#fff"/><rect x="5" y="5" width="1" height="1" fill="#fff"/><rect x="6" y="5" width="1" height="1" fill="#fff"/><rect x="7" y="5" width="1" height="1" fill="#fff"/><rect x="8" y="5" width="1" height="1" fill="#fff"/><rect x="9" y="5" width="1" height="1" fill="#fff"/><rect x="2" y="6" width="1" height="1" fill="#fff"/><rect x="3" y="6" width="1" height="1" fill="#fff"/><rect x="4" y="6" width="1" height="1" fill="#fff"/><rect x="5" y="6" width="1" height="1" fill="#fff"/><rect x="6" y="6" width="1" height="1" fill="#fff"/><rect x="7" y="6" width="1" height="1" fill="#fff"/><rect x="8" y="6" width="1" height="1" fill="#fff"/><rect x="9" y="6" width="1" height="1" fill="#fff"/><rect x="2" y="7" width="1" height="1" fill="#fff"/><rect x="3" y="7" width="1" height="1" fill="#fff"/><rect x="4" y="7" width="1" height="1" fill="#fff"/><rect x="5" y="7" width="1" height="1" fill="#fff"/><rect x="6" y="7" width="1" height="1" fill="#fff"/><rect x="7" y="7" width="1" height="1" fill="#fff"/><rect x="8" y="7" width="1" height="1" fill="#fff"/><rect x="9" y="7" width="1" height="1" fill="#fff"/><rect x="3" y="8" width="1" height="1" fill="#fff"/><rect x="4" y="8" width="1" height="1" fill="#fff"/><rect x="5" y="8" width="1" height="1" fill="#fff"/><rect x="6" y="8" width="1" height="1" fill="#fff"/><rect x="7" y="8" width="1" height="1" fill="#fff"/><rect x="8" y="8" width="1" height="1" fill="#fff"/><rect x="4" y="9" width="1" height="1" fill="#fff"/><rect x="5" y="9" width="1" height="1" fill="#fff"/><rect x="6" y="9" width="1" height="1" fill="#fff"/><rect x="7" y="9" width="1" height="1" fill="#fff"/><rect x="4" y="0" width="1" height="1" fill="#a0a0a0"/><rect x="5" y="0" width="1" height="1" fill="#a0a0a0"/><rect x="6" y="0" width="1" height="1" fill="#a0a0a0"/><rect x="7" y="0" width="1" height="1" fill="#a0a0a0"/><rect x="2" y="1" width="1" height="1" fill="#a0a0a0"/><rect x="3" y="1" width="1" height="1" fill="#a0a0a0"/><rect x="8" y="1" width="1" height="1" fill="#a0a0a0"/><rect x="9" y="1" width="1" height="1" fill="#a0a0a0"/><rect x="1" y="2" width="1" height="1" fill="#a0a0a0"/><rect x="1" y="3" width="1" height="1" fill="#a0a0a0"/><rect x="0" y="4" width="1" height="1" fill="#a0a0a0"/><rect x="0" y="5" width="1" height="1" fill="#a0a0a0"/><rect x="0" y="6" width="1" height="1" fill="#a0a0a0"/><rect x="0" y="7" width="1" height="1" fill="#a0a0a0"/><rect x="1" y="8" width="1" height="1" fill="#a0a0a0"/><rect x="1" y="9" width="1" height="1" fill="#a0a0a0"/><rect x="4" y="1" width="1" height="1" fill="#696969"/><rect x="5" y="1" width="1" height="1" fill="#696969"/><rect x="6" y="1" width="1" height="1" fill="#696969"/><rect x="7" y="1" width="1" height="1" fill="#696969"/><rect x="2" y="2" width="1" height="1" fill="#696969"/><rect x="3" y="2" width="1" height="1" fill="#696969"/><rect x="8" y="2" width="1" height="1" fill="#696969"/><rect x="9" y="2" width="1" height="1" fill="#696969"/><rect x="2" y="3" width="1" height="1" fill="#696969"/><rect x="1" y="4" width="1" height="1" fill="#696969"/><rect x="1" y="5" width="1" height="1" fill="#696969"/><rect x="1" y="6" width="1" height="1" fill="#696969"/><rect x="1" y="7" width="1" height="1" fill="#696969"/><rect x="2" y="8" width="1" height="1" fill="#696969"/><rect x="10" y="2" width="1" height="1" fill="#fff"/><rect x="10" y="3" width="1" height="1" fill="#fff"/><rect x="11" y="4" width="1" height="1" fill="#fff"/><rect x="11" y="5" width="1" height="1" fill="#fff"/><rect x="11" y="6" width="1" height="1" fill="#fff"/><rect x="11" y="7" width="1" height="1" fill="#fff"/><rect x="10" y="8" width="1" height="1" fill="#fff"/><rect x="10" y="9" width="1" height="1" fill="#fff"/><rect x="2" y="10" width="1" height="1" fill="#fff"/><rect x="3" y="10" width="1" height="1" fill="#fff"/><rect x="8" y="10" width="1" height="1" fill="#fff"/><rect x="9" y="10" width="1" height="1" fill="#fff"/><rect x="4" y="11" width="1" height="1" fill="#fff"/><rect x="5" y="11" width="1" height="1" fill="#fff"/><rect x="6" y="11" width="1" height="1" fill="#fff"/><rect x="7" y="11" width="1" height="1" fill="#fff"/><rect x="9" y="3" width="1" height="1" fill="#e3e3e3"/><rect x="10" y="4" width="1" height="1" fill="#e3e3e3"/><rect x="10" y="5" width="1" height="1" fill="#e3e3e3"/><rect x="10" y="6" width="1" height="1" fill="#e3e3e3"/><rect x="10" y="7" width="1" height="1" fill="#e3e3e3"/><rect x="9" y="8" width="1" height="1" fill="#e3e3e3"/><rect x="2" y="9" width="1" height="1" fill="#e3e3e3"/><rect x="3" y="9" width="1" height="1" fill="#e3e3e3"/><rect x="8" y="9" width="1" height="1" fill="#e3e3e3"/><rect x="9" y="9" width="1" height="1" fill="#e3e3e3"/><rect x="4" y="10" width="1" height="1" fill="#e3e3e3"/><rect x="5" y="10" width="1" height="1" fill="#e3e3e3"/><rect x="6" y="10" width="1" height="1" fill="#e3e3e3"/><rect x="7" y="10" width="1" height="1" fill="#e3e3e3"/></svg><svg class="rd" style="left:8px;top:391px" width="12" height="12" shape-rendering="crispEdges"><rect x="4" y="2" width="1" height="1" fill="#fff"/><rect x="5" y="2" width="1" height="1" fill="#fff"/><rect x="6" y="2" width="1" height="1" fill="#fff"/><rect x="7" y="2" width="1" height="1" fill="#fff"/><rect x="3" y="3" width="1" height="1" fill="#fff"/><rect x="4" y="3" width="1" height="1" fill="#fff"/><rect x="5" y="3" width="1" height="1" fill="#fff"/><rect x="6" y="3" width="1" height="1" fill="#fff"/><rect x="7" y="3" width="1" height="1" fill="#fff"/><rect x="8" y="3" width="1" height="1" fill="#fff"/><rect x="2" y="4" width="1" height="1" fill="#fff"/><rect x="3" y="4" width="1" height="1" fill="#fff"/><rect x="4" y="4" width="1" height="1" fill="#fff"/><rect x="5" y="4" width="1" height="1" fill="#fff"/><rect x="6" y="4" width="1" height="1" fill="#fff"/><rect x="7" y="4" width="1" height="1" fill="#fff"/><rect x="8" y="4" width="1" height="1" fill="#fff"/><rect x="9" y="4" width="1" height="1" fill="#fff"/><rect x="2" y="5" width="1" height="1" fill="#fff"/><rect x="3" y="5" width="1" height="1" fill="#fff"/><rect x="4" y="5" width="1" height="1" fill="#fff"/><rect x="5" y="5" width="1" height="1" fill="#fff"/><rect x="6" y="5" width="1" height="1" fill="#fff"/><rect x="7" y="5" width="1" height="1" fill="#fff"/><rect x="8" y="5" width="1" height="1" fill="#fff"/><rect x="9" y="5" width="1" height="1" fill="#fff"/><rect x="2" y="6" width="1" height="1" fill="#fff"/><rect x="3" y="6" width="1" height="1" fill="#fff"/><rect x="4" y="6" width="1" height="1" fill="#fff"/><rect x="5" y="6" width="1" height="1" fill="#fff"/><rect x="6" y="6" width="1" height="1" fill="#fff"/><rect x="7" y="6" width="1" height="1" fill="#fff"/><rect x="8" y="6" width="1" height="1" fill="#fff"/><rect x="9" y="6" width="1" height="1" fill="#fff"/><rect x="2" y="7" width="1" height="1" fill="#fff"/><rect x="3" y="7" width="1" height="1" fill="#fff"/><rect x="4" y="7" width="1" height="1" fill="#fff"/><rect x="5" y="7" width="1" height="1" fill="#fff"/><rect x="6" y="7" width="1" height="1" fill="#fff"/><rect x="7" y="7" width="1" height="1" fill="#fff"/><rect x="8" y="7" width="1" height="1" fill="#fff"/><rect x="9" y="7" width="1" height="1" fill="#fff"/><rect x="3" y="8" width="1" height="1" fill="#fff"/><rect x="4" y="8" width="1" height="1" fill="#fff"/><rect x="5" y="8" width="1" height="1" fill="#fff"/><rect x="6" y="8" width="1" height="1" fill="#fff"/><rect x="7" y="8" width="1" height="1" fill="#fff"/><rect x="8" y="8" width="1" height="1" fill="#fff"/><rect x="4" y="9" width="1" height="1" fill="#fff"/><rect x="5" y="9" width="1" height="1" fill="#fff"/><rect x="6" y="9" width="1" height="1" fill="#fff"/><rect x="7" y="9" width="1" height="1" fill="#fff"/><rect x="4" y="0" width="1" height="1" fill="#a0a0a0"/><rect x="5" y="0" width="1" height="1" fill="#a0a0a0"/><rect x="6" y="0" width="1" height="1" fill="#a0a0a0"/><rect x="7" y="0" width="1" height="1" fill="#a0a0a0"/><rect x="2" y="1" width="1" height="1" fill="#a0a0a0"/><rect x="3" y="1" width="1" height="1" fill="#a0a0a0"/><rect x="8" y="1" width="1" height="1" fill="#a0a0a0"/><rect x="9" y="1" width="1" height="1" fill="#a0a0a0"/><rect x="1" y="2" width="1" height="1" fill="#a0a0a0"/><rect x="1" y="3" width="1" height="1" fill="#a0a0a0"/><rect x="0" y="4" width="1" height="1" fill="#a0a0a0"/><rect x="0" y="5" width="1" height="1" fill="#a0a0a0"/><rect x="0" y="6" width="1" height="1" fill="#a0a0a0"/><rect x="0" y="7" width="1" height="1" fill="#a0a0a0"/><rect x="1" y="8" width="1" height="1" fill="#a0a0a0"/><rect x="1" y="9" width="1" height="1" fill="#a0a0a0"/><rect x="4" y="1" width="1" height="1" fill="#696969"/><rect x="5" y="1" width="1" height="1" fill="#696969"/><rect x="6" y="1" width="1" height="1" fill="#696969"/><rect x="7" y="1" width="1" height="1" fill="#696969"/><rect x="2" y="2" width="1" height="1" fill="#696969"/><rect x="3" y="2" width="1" height="1" fill="#696969"/><rect x="8" y="2" width="1" height="1" fill="#696969"/><rect x="9" y="2" width="1" height="1" fill="#696969"/><rect x="2" y="3" width="1" height="1" fill="#696969"/><rect x="1" y="4" width="1" height="1" fill="#696969"/><rect x="1" y="5" width="1" height="1" fill="#696969"/><rect x="1" y="6" width="1" height="1" fill="#696969"/><rect x="1" y="7" width="1" height="1" fill="#696969"/><rect x="2" y="8" width="1" height="1" fill="#696969"/><rect x="10" y="2" width="1" height="1" fill="#fff"/><rect x="10" y="3" width="1" height="1" fill="#fff"/><rect x="11" y="4" width="1" height="1" fill="#fff"/><rect x="11" y="5" width="1" height="1" fill="#fff"/><rect x="11" y="6" width="1" height="1" fill="#fff"/><rect x="11" y="7" width="1" height="1" fill="#fff"/><rect x="10" y="8" width="1" height="1" fill="#fff"/><rect x="10" y="9" width="1" height="1" fill="#fff"/><rect x="2" y="10" width="1" height="1" fill="#fff"/><rect x="3" y="10" width="1" height="1" fill="#fff"/><rect x="8" y="10" width="1" height="1" fill="#fff"/><rect x="9" y="10" width="1" height="1" fill="#fff"/><rect x="4" y="11" width="1" height="1" fill="#fff"/><rect x="5" y="11" width="1" height="1" fill="#fff"/><rect x="6" y="11" width="1" height="1" fill="#fff"/><rect x="7" y="11" width="1" height="1" fill="#fff"/><rect x="9" y="3" width="1" height="1" fill="#e3e3e3"/><rect x="10" y="4" width="1" height="1" fill="#e3e3e3"/><rect x="10" y="5" width="1" height="1" fill="#e3e3e3"/><rect x="10" y="6" width="1" height="1" fill="#e3e3e3"/><rect x="10" y="7" width="1" height="1" fill="#e3e3e3"/><rect x="9" y="8" width="1" height="1" fill="#e3e3e3"/><rect x="2" y="9" width="1" height="1" fill="#e3e3e3"/><rect x="3" y="9" width="1" height="1" fill="#e3e3e3"/><rect x="8" y="9" width="1" height="1" fill="#e3e3e3"/><rect x="9" y="9" width="1" height="1" fill="#e3e3e3"/><rect x="4" y="10" width="1" height="1" fill="#e3e3e3"/><rect x="5" y="10" width="1" height="1" fill="#e3e3e3"/><rect x="6" y="10" width="1" height="1" fill="#e3e3e3"/><rect x="7" y="10" width="1" height="1" fill="#e3e3e3"/></svg><svg class="rd" style="left:8px;top:411px" width="12" height="12" shape-rendering="crispEdges"><rect x="4" y="2" width="1" height="1" fill="#fff"/><rect x="5" y="2" width="1" height="1" fill="#fff"/><rect x="6" y="2" width="1" height="1" fill="#fff"/><rect x="7" y="2" width="1" height="1" fill="#fff"/><rect x="3" y="3" width="1" height="1" fill="#fff"/><rect x="4" y="3" width="1" height="1" fill="#fff"/><rect x="5" y="3" width="1" height="1" fill="#fff"/><rect x="6" y="3" width="1" height="1" fill="#fff"/><rect x="7" y="3" width="1" height="1" fill="#fff"/><rect x="8" y="3" width="1" height="1" fill="#fff"/><rect x="2" y="4" width="1" height="1" fill="#fff"/><rect x="3" y="4" width="1" height="1" fill="#fff"/><rect x="4" y="4" width="1" height="1" fill="#fff"/><rect x="5" y="4" width="1" height="1" fill="#fff"/><rect x="6" y="4" width="1" height="1" fill="#fff"/><rect x="7" y="4" width="1" height="1" fill="#fff"/><rect x="8" y="4" width="1" height="1" fill="#fff"/><rect x="9" y="4" width="1" height="1" fill="#fff"/><rect x="2" y="5" width="1" height="1" fill="#fff"/><rect x="3" y="5" width="1" height="1" fill="#fff"/><rect x="4" y="5" width="1" height="1" fill="#fff"/><rect x="5" y="5" width="1" height="1" fill="#fff"/><rect x="6" y="5" width="1" height="1" fill="#fff"/><rect x="7" y="5" width="1" height="1" fill="#fff"/><rect x="8" y="5" width="1" height="1" fill="#fff"/><rect x="9" y="5" width="1" height="1" fill="#fff"/><rect x="2" y="6" width="1" height="1" fill="#fff"/><rect x="3" y="6" width="1" height="1" fill="#fff"/><rect x="4" y="6" width="1" height="1" fill="#fff"/><rect x="5" y="6" width="1" height="1" fill="#fff"/><rect x="6" y="6" width="1" height="1" fill="#fff"/><rect x="7" y="6" width="1" height="1" fill="#fff"/><rect x="8" y="6" width="1" height="1" fill="#fff"/><rect x="9" y="6" width="1" height="1" fill="#fff"/><rect x="2" y="7" width="1" height="1" fill="#fff"/><rect x="3" y="7" width="1" height="1" fill="#fff"/><rect x="4" y="7" width="1" height="1" fill="#fff"/><rect x="5" y="7" width="1" height="1" fill="#fff"/><rect x="6" y="7" width="1" height="1" fill="#fff"/><rect x="7" y="7" width="1" height="1" fill="#fff"/><rect x="8" y="7" width="1" height="1" fill="#fff"/><rect x="9" y="7" width="1" height="1" fill="#fff"/><rect x="3" y="8" width="1" height="1" fill="#fff"/><rect x="4" y="8" width="1" height="1" fill="#fff"/><rect x="5" y="8" width="1" height="1" fill="#fff"/><rect x="6" y="8" width="1" height="1" fill="#fff"/><rect x="7" y="8" width="1" height="1" fill="#fff"/><rect x="8" y="8" width="1" height="1" fill="#fff"/><rect x="4" y="9" width="1" height="1" fill="#fff"/><rect x="5" y="9" width="1" height="1" fill="#fff"/><rect x="6" y="9" width="1" height="1" fill="#fff"/><rect x="7" y="9" width="1" height="1" fill="#fff"/><rect x="4" y="0" width="1" height="1" fill="#a0a0a0"/><rect x="5" y="0" width="1" height="1" fill="#a0a0a0"/><rect x="6" y="0" width="1" height="1" fill="#a0a0a0"/><rect x="7" y="0" width="1" height="1" fill="#a0a0a0"/><rect x="2" y="1" width="1" height="1" fill="#a0a0a0"/><rect x="3" y="1" width="1" height="1" fill="#a0a0a0"/><rect x="8" y="1" width="1" height="1" fill="#a0a0a0"/><rect x="9" y="1" width="1" height="1" fill="#a0a0a0"/><rect x="1" y="2" width="1" height="1" fill="#a0a0a0"/><rect x="1" y="3" width="1" height="1" fill="#a0a0a0"/><rect x="0" y="4" width="1" height="1" fill="#a0a0a0"/><rect x="0" y="5" width="1" height="1" fill="#a0a0a0"/><rect x="0" y="6" width="1" height="1" fill="#a0a0a0"/><rect x="0" y="7" width="1" height="1" fill="#a0a0a0"/><rect x="1" y="8" width="1" height="1" fill="#a0a0a0"/><rect x="1" y="9" width="1" height="1" fill="#a0a0a0"/><rect x="4" y="1" width="1" height="1" fill="#696969"/><rect x="5" y="1" width="1" height="1" fill="#696969"/><rect x="6" y="1" width="1" height="1" fill="#696969"/><rect x="7" y="1" width="1" height="1" fill="#696969"/><rect x="2" y="2" width="1" height="1" fill="#696969"/><rect x="3" y="2" width="1" height="1" fill="#696969"/><rect x="8" y="2" width="1" height="1" fill="#696969"/><rect x="9" y="2" width="1" height="1" fill="#696969"/><rect x="2" y="3" width="1" height="1" fill="#696969"/><rect x="1" y="4" width="1" height="1" fill="#696969"/><rect x="1" y="5" width="1" height="1" fill="#696969"/><rect x="1" y="6" width="1" height="1" fill="#696969"/><rect x="1" y="7" width="1" height="1" fill="#696969"/><rect x="2" y="8" width="1" height="1" fill="#696969"/><rect x="10" y="2" width="1" height="1" fill="#fff"/><rect x="10" y="3" width="1" height="1" fill="#fff"/><rect x="11" y="4" width="1" height="1" fill="#fff"/><rect x="11" y="5" width="1" height="1" fill="#fff"/><rect x="11" y="6" width="1" height="1" fill="#fff"/><rect x="11" y="7" width="1" height="1" fill="#fff"/><rect x="10" y="8" width="1" height="1" fill="#fff"/><rect x="10" y="9" width="1" height="1" fill="#fff"/><rect x="2" y="10" width="1" height="1" fill="#fff"/><rect x="3" y="10" width="1" height="1" fill="#fff"/><rect x="8" y="10" width="1" height="1" fill="#fff"/><rect x="9" y="10" width="1" height="1" fill="#fff"/><rect x="4" y="11" width="1" height="1" fill="#fff"/><rect x="5" y="11" width="1" height="1" fill="#fff"/><rect x="6" y="11" width="1" height="1" fill="#fff"/><rect x="7" y="11" width="1" height="1" fill="#fff"/><rect x="9" y="3" width="1" height="1" fill="#e3e3e3"/><rect x="10" y="4" width="1" height="1" fill="#e3e3e3"/><rect x="10" y="5" width="1" height="1" fill="#e3e3e3"/><rect x="10" y="6" width="1" height="1" fill="#e3e3e3"/><rect x="10" y="7" width="1" height="1" fill="#e3e3e3"/><rect x="9" y="8" width="1" height="1" fill="#e3e3e3"/><rect x="2" y="9" width="1" height="1" fill="#e3e3e3"/><rect x="3" y="9" width="1" height="1" fill="#e3e3e3"/><rect x="8" y="9" width="1" height="1" fill="#e3e3e3"/><rect x="9" y="9" width="1" height="1" fill="#e3e3e3"/><rect x="4" y="10" width="1" height="1" fill="#e3e3e3"/><rect x="5" y="10" width="1" height="1" fill="#e3e3e3"/><rect x="6" y="10" width="1" height="1" fill="#e3e3e3"/><rect x="7" y="10" width="1" height="1" fill="#e3e3e3"/></svg><svg class="rd" style="left:8px;top:431px" width="12" height="12" shape-rendering="crispEdges"><rect x="4" y="2" width="1" height="1" fill="#fff"/><rect x="5" y="2" width="1" height="1" fill="#fff"/><rect x="6" y="2" width="1" height="1" fill="#fff"/><rect x="7" y="2" width="1" height="1" fill="#fff"/><rect x="3" y="3" width="1" height="1" fill="#fff"/><rect x="4" y="3" width="1" height="1" fill="#fff"/><rect x="5" y="3" width="1" height="1" fill="#fff"/><rect x="6" y="3" width="1" height="1" fill="#fff"/><rect x="7" y="3" width="1" height="1" fill="#fff"/><rect x="8" y="3" width="1" height="1" fill="#fff"/><rect x="2" y="4" width="1" height="1" fill="#fff"/><rect x="3" y="4" width="1" height="1" fill="#fff"/><rect x="4" y="4" width="1" height="1" fill="#fff"/><rect x="5" y="4" width="1" height="1" fill="#fff"/><rect x="6" y="4" width="1" height="1" fill="#fff"/><rect x="7" y="4" width="1" height="1" fill="#fff"/><rect x="8" y="4" width="1" height="1" fill="#fff"/><rect x="9" y="4" width="1" height="1" fill="#fff"/><rect x="2" y="5" width="1" height="1" fill="#fff"/><rect x="3" y="5" width="1" height="1" fill="#fff"/><rect x="4" y="5" width="1" height="1" fill="#fff"/><rect x="5" y="5" width="1" height="1" fill="#fff"/><rect x="6" y="5" width="1" height="1" fill="#fff"/><rect x="7" y="5" width="1" height="1" fill="#fff"/><rect x="8" y="5" width="1" height="1" fill="#fff"/><rect x="9" y="5" width="1" height="1" fill="#fff"/><rect x="2" y="6" width="1" height="1" fill="#fff"/><rect x="3" y="6" width="1" height="1" fill="#fff"/><rect x="4" y="6" width="1" height="1" fill="#fff"/><rect x="5" y="6" width="1" height="1" fill="#fff"/><rect x="6" y="6" width="1" height="1" fill="#fff"/><rect x="7" y="6" width="1" height="1" fill="#fff"/><rect x="8" y="6" width="1" height="1" fill="#fff"/><rect x="9" y="6" width="1" height="1" fill="#fff"/><rect x="2" y="7" width="1" height="1" fill="#fff"/><rect x="3" y="7" width="1" height="1" fill="#fff"/><rect x="4" y="7" width="1" height="1" fill="#fff"/><rect x="5" y="7" width="1" height="1" fill="#fff"/><rect x="6" y="7" width="1" height="1" fill="#fff"/><rect x="7" y="7" width="1" height="1" fill="#fff"/><rect x="8" y="7" width="1" height="1" fill="#fff"/><rect x="9" y="7" width="1" height="1" fill="#fff"/><rect x="3" y="8" width="1" height="1" fill="#fff"/><rect x="4" y="8" width="1" height="1" fill="#fff"/><rect x="5" y="8" width="1" height="1" fill="#fff"/><rect x="6" y="8" width="1" height="1" fill="#fff"/><rect x="7" y="8" width="1" height="1" fill="#fff"/><rect x="8" y="8" width="1" height="1" fill="#fff"/><rect x="4" y="9" width="1" height="1" fill="#fff"/><rect x="5" y="9" width="1" height="1" fill="#fff"/><rect x="6" y="9" width="1" height="1" fill="#fff"/><rect x="7" y="9" width="1" height="1" fill="#fff"/><rect x="4" y="0" width="1" height="1" fill="#a0a0a0"/><rect x="5" y="0" width="1" height="1" fill="#a0a0a0"/><rect x="6" y="0" width="1" height="1" fill="#a0a0a0"/><rect x="7" y="0" width="1" height="1" fill="#a0a0a0"/><rect x="2" y="1" width="1" height="1" fill="#a0a0a0"/><rect x="3" y="1" width="1" height="1" fill="#a0a0a0"/><rect x="8" y="1" width="1" height="1" fill="#a0a0a0"/><rect x="9" y="1" width="1" height="1" fill="#a0a0a0"/><rect x="1" y="2" width="1" height="1" fill="#a0a0a0"/><rect x="1" y="3" width="1" height="1" fill="#a0a0a0"/><rect x="0" y="4" width="1" height="1" fill="#a0a0a0"/><rect x="0" y="5" width="1" height="1" fill="#a0a0a0"/><rect x="0" y="6" width="1" height="1" fill="#a0a0a0"/><rect x="0" y="7" width="1" height="1" fill="#a0a0a0"/><rect x="1" y="8" width="1" height="1" fill="#a0a0a0"/><rect x="1" y="9" width="1" height="1" fill="#a0a0a0"/><rect x="4" y="1" width="1" height="1" fill="#696969"/><rect x="5" y="1" width="1" height="1" fill="#696969"/><rect x="6" y="1" width="1" height="1" fill="#696969"/><rect x="7" y="1" width="1" height="1" fill="#696969"/><rect x="2" y="2" width="1" height="1" fill="#696969"/><rect x="3" y="2" width="1" height="1" fill="#696969"/><rect x="8" y="2" width="1" height="1" fill="#696969"/><rect x="9" y="2" width="1" height="1" fill="#696969"/><rect x="2" y="3" width="1" height="1" fill="#696969"/><rect x="1" y="4" width="1" height="1" fill="#696969"/><rect x="1" y="5" width="1" height="1" fill="#696969"/><rect x="1" y="6" width="1" height="1" fill="#696969"/><rect x="1" y="7" width="1" height="1" fill="#696969"/><rect x="2" y="8" width="1" height="1" fill="#696969"/><rect x="10" y="2" width="1" height="1" fill="#fff"/><rect x="10" y="3" width="1" height="1" fill="#fff"/><rect x="11" y="4" width="1" height="1" fill="#fff"/><rect x="11" y="5" width="1" height="1" fill="#fff"/><rect x="11" y="6" width="1" height="1" fill="#fff"/><rect x="11" y="7" width="1" height="1" fill="#fff"/><rect x="10" y="8" width="1" height="1" fill="#fff"/><rect x="10" y="9" width="1" height="1" fill="#fff"/><rect x="2" y="10" width="1" height="1" fill="#fff"/><rect x="3" y="10" width="1" height="1" fill="#fff"/><rect x="8" y="10" width="1" height="1" fill="#fff"/><rect x="9" y="10" width="1" height="1" fill="#fff"/><rect x="4" y="11" width="1" height="1" fill="#fff"/><rect x="5" y="11" width="1" height="1" fill="#fff"/><rect x="6" y="11" width="1" height="1" fill="#fff"/><rect x="7" y="11" width="1" height="1" fill="#fff"/><rect x="9" y="3" width="1" height="1" fill="#e3e3e3"/><rect x="10" y="4" width="1" height="1" fill="#e3e3e3"/><rect x="10" y="5" width="1" height="1" fill="#e3e3e3"/><rect x="10" y="6" width="1" height="1" fill="#e3e3e3"/><rect x="10" y="7" width="1" height="1" fill="#e3e3e3"/><rect x="9" y="8" width="1" height="1" fill="#e3e3e3"/><rect x="2" y="9" width="1" height="1" fill="#e3e3e3"/><rect x="3" y="9" width="1" height="1" fill="#e3e3e3"/><rect x="8" y="9" width="1" height="1" fill="#e3e3e3"/><rect x="9" y="9" width="1" height="1" fill="#e3e3e3"/><rect x="4" y="10" width="1" height="1" fill="#e3e3e3"/><rect x="5" y="10" width="1" height="1" fill="#e3e3e3"/><rect x="6" y="10" width="1" height="1" fill="#e3e3e3"/><rect x="7" y="10" width="1" height="1" fill="#e3e3e3"/></svg><svg class="rd" style="left:8px;top:451px" width="12" height="12" shape-rendering="crispEdges"><rect x="4" y="2" width="1" height="1" fill="#fff"/><rect x="5" y="2" width="1" height="1" fill="#fff"/><rect x="6" y="2" width="1" height="1" fill="#fff"/><rect x="7" y="2" width="1" height="1" fill="#fff"/><rect x="3" y="3" width="1" height="1" fill="#fff"/><rect x="4" y="3" width="1" height="1" fill="#fff"/><rect x="5" y="3" width="1" height="1" fill="#fff"/><rect x="6" y="3" width="1" height="1" fill="#fff"/><rect x="7" y="3" width="1" height="1" fill="#fff"/><rect x="8" y="3" width="1" height="1" fill="#fff"/><rect x="2" y="4" width="1" height="1" fill="#fff"/><rect x="3" y="4" width="1" height="1" fill="#fff"/><rect x="4" y="4" width="1" height="1" fill="#fff"/><rect x="5" y="4" width="1" height="1" fill="#fff"/><rect x="6" y="4" width="1" height="1" fill="#fff"/><rect x="7" y="4" width="1" height="1" fill="#fff"/><rect x="8" y="4" width="1" height="1" fill="#fff"/><rect x="9" y="4" width="1" height="1" fill="#fff"/><rect x="2" y="5" width="1" height="1" fill="#fff"/><rect x="3" y="5" width="1" height="1" fill="#fff"/><rect x="4" y="5" width="1" height="1" fill="#fff"/><rect x="5" y="5" width="1" height="1" fill="#fff"/><rect x="6" y="5" width="1" height="1" fill="#fff"/><rect x="7" y="5" width="1" height="1" fill="#fff"/><rect x="8" y="5" width="1" height="1" fill="#fff"/><rect x="9" y="5" width="1" height="1" fill="#fff"/><rect x="2" y="6" width="1" height="1" fill="#fff"/><rect x="3" y="6" width="1" height="1" fill="#fff"/><rect x="4" y="6" width="1" height="1" fill="#fff"/><rect x="5" y="6" width="1" height="1" fill="#fff"/><rect x="6" y="6" width="1" height="1" fill="#fff"/><rect x="7" y="6" width="1" height="1" fill="#fff"/><rect x="8" y="6" width="1" height="1" fill="#fff"/><rect x="9" y="6" width="1" height="1" fill="#fff"/><rect x="2" y="7" width="1" height="1" fill="#fff"/><rect x="3" y="7" width="1" height="1" fill="#fff"/><rect x="4" y="7" width="1" height="1" fill="#fff"/><rect x="5" y="7" width="1" height="1" fill="#fff"/><rect x="6" y="7" width="1" height="1" fill="#fff"/><rect x="7" y="7" width="1" height="1" fill="#fff"/><rect x="8" y="7" width="1" height="1" fill="#fff"/><rect x="9" y="7" width="1" height="1" fill="#fff"/><rect x="3" y="8" width="1" height="1" fill="#fff"/><rect x="4" y="8" width="1" height="1" fill="#fff"/><rect x="5" y="8" width="1" height="1" fill="#fff"/><rect x="6" y="8" width="1" height="1" fill="#fff"/><rect x="7" y="8" width="1" height="1" fill="#fff"/><rect x="8" y="8" width="1" height="1" fill="#fff"/><rect x="4" y="9" width="1" height="1" fill="#fff"/><rect x="5" y="9" width="1" height="1" fill="#fff"/><rect x="6" y="9" width="1" height="1" fill="#fff"/><rect x="7" y="9" width="1" height="1" fill="#fff"/><rect x="4" y="0" width="1" height="1" fill="#a0a0a0"/><rect x="5" y="0" width="1" height="1" fill="#a0a0a0"/><rect x="6" y="0" width="1" height="1" fill="#a0a0a0"/><rect x="7" y="0" width="1" height="1" fill="#a0a0a0"/><rect x="2" y="1" width="1" height="1" fill="#a0a0a0"/><rect x="3" y="1" width="1" height="1" fill="#a0a0a0"/><rect x="8" y="1" width="1" height="1" fill="#a0a0a0"/><rect x="9" y="1" width="1" height="1" fill="#a0a0a0"/><rect x="1" y="2" width="1" height="1" fill="#a0a0a0"/><rect x="1" y="3" width="1" height="1" fill="#a0a0a0"/><rect x="0" y="4" width="1" height="1" fill="#a0a0a0"/><rect x="0" y="5" width="1" height="1" fill="#a0a0a0"/><rect x="0" y="6" width="1" height="1" fill="#a0a0a0"/><rect x="0" y="7" width="1" height="1" fill="#a0a0a0"/><rect x="1" y="8" width="1" height="1" fill="#a0a0a0"/><rect x="1" y="9" width="1" height="1" fill="#a0a0a0"/><rect x="4" y="1" width="1" height="1" fill="#696969"/><rect x="5" y="1" width="1" height="1" fill="#696969"/><rect x="6" y="1" width="1" height="1" fill="#696969"/><rect x="7" y="1" width="1" height="1" fill="#696969"/><rect x="2" y="2" width="1" height="1" fill="#696969"/><rect x="3" y="2" width="1" height="1" fill="#696969"/><rect x="8" y="2" width="1" height="1" fill="#696969"/><rect x="9" y="2" width="1" height="1" fill="#696969"/><rect x="2" y="3" width="1" height="1" fill="#696969"/><rect x="1" y="4" width="1" height="1" fill="#696969"/><rect x="1" y="5" width="1" height="1" fill="#696969"/><rect x="1" y="6" width="1" height="1" fill="#696969"/><rect x="1" y="7" width="1" height="1" fill="#696969"/><rect x="2" y="8" width="1" height="1" fill="#696969"/><rect x="10" y="2" width="1" height="1" fill="#fff"/><rect x="10" y="3" width="1" height="1" fill="#fff"/><rect x="11" y="4" width="1" height="1" fill="#fff"/><rect x="11" y="5" width="1" height="1" fill="#fff"/><rect x="11" y="6" width="1" height="1" fill="#fff"/><rect x="11" y="7" width="1" height="1" fill="#fff"/><rect x="10" y="8" width="1" height="1" fill="#fff"/><rect x="10" y="9" width="1" height="1" fill="#fff"/><rect x="2" y="10" width="1" height="1" fill="#fff"/><rect x="3" y="10" width="1" height="1" fill="#fff"/><rect x="8" y="10" width="1" height="1" fill="#fff"/><rect x="9" y="10" width="1" height="1" fill="#fff"/><rect x="4" y="11" width="1" height="1" fill="#fff"/><rect x="5" y="11" width="1" height="1" fill="#fff"/><rect x="6" y="11" width="1" height="1" fill="#fff"/><rect x="7" y="11" width="1" height="1" fill="#fff"/><rect x="9" y="3" width="1" height="1" fill="#e3e3e3"/><rect x="10" y="4" width="1" height="1" fill="#e3e3e3"/><rect x="10" y="5" width="1" height="1" fill="#e3e3e3"/><rect x="10" y="6" width="1" height="1" fill="#e3e3e3"/><rect x="10" y="7" width="1" height="1" fill="#e3e3e3"/><rect x="9" y="8" width="1" height="1" fill="#e3e3e3"/><rect x="2" y="9" width="1" height="1" fill="#e3e3e3"/><rect x="3" y="9" width="1" height="1" fill="#e3e3e3"/><rect x="8" y="9" width="1" height="1" fill="#e3e3e3"/><rect x="9" y="9" width="1" height="1" fill="#e3e3e3"/><rect x="4" y="10" width="1" height="1" fill="#e3e3e3"/><rect x="5" y="10" width="1" height="1" fill="#e3e3e3"/><rect x="6" y="10" width="1" height="1" fill="#e3e3e3"/><rect x="7" y="10" width="1" height="1" fill="#e3e3e3"/></svg><svg class="rd" style="left:8px;top:471px" width="12" height="12" shape-rendering="crispEdges"><rect x="4" y="2" width="1" height="1" fill="#fff"/><rect x="5" y="2" width="1" height="1" fill="#fff"/><rect x="6" y="2" width="1" height="1" fill="#fff"/><rect x="7" y="2" width="1" height="1" fill="#fff"/><rect x="3" y="3" width="1" height="1" fill="#fff"/><rect x="4" y="3" width="1" height="1" fill="#fff"/><rect x="5" y="3" width="1" height="1" fill="#fff"/><rect x="6" y="3" width="1" height="1" fill="#fff"/><rect x="7" y="3" width="1" height="1" fill="#fff"/><rect x="8" y="3" width="1" height="1" fill="#fff"/><rect x="2" y="4" width="1" height="1" fill="#fff"/><rect x="3" y="4" width="1" height="1" fill="#fff"/><rect x="4" y="4" width="1" height="1" fill="#fff"/><rect x="5" y="4" width="1" height="1" fill="#fff"/><rect x="6" y="4" width="1" height="1" fill="#fff"/><rect x="7" y="4" width="1" height="1" fill="#fff"/><rect x="8" y="4" width="1" height="1" fill="#fff"/><rect x="9" y="4" width="1" height="1" fill="#fff"/><rect x="2" y="5" width="1" height="1" fill="#fff"/><rect x="3" y="5" width="1" height="1" fill="#fff"/><rect x="4" y="5" width="1" height="1" fill="#fff"/><rect x="5" y="5" width="1" height="1" fill="#fff"/><rect x="6" y="5" width="1" height="1" fill="#fff"/><rect x="7" y="5" width="1" height="1" fill="#fff"/><rect x="8" y="5" width="1" height="1" fill="#fff"/><rect x="9" y="5" width="1" height="1" fill="#fff"/><rect x="2" y="6" width="1" height="1" fill="#fff"/><rect x="3" y="6" width="1" height="1" fill="#fff"/><rect x="4" y="6" width="1" height="1" fill="#fff"/><rect x="5" y="6" width="1" height="1" fill="#fff"/><rect x="6" y="6" width="1" height="1" fill="#fff"/><rect x="7" y="6" width="1" height="1" fill="#fff"/><rect x="8" y="6" width="1" height="1" fill="#fff"/><rect x="9" y="6" width="1" height="1" fill="#fff"/><rect x="2" y="7" width="1" height="1" fill="#fff"/><rect x="3" y="7" width="1" height="1" fill="#fff"/><rect x="4" y="7" width="1" height="1" fill="#fff"/><rect x="5" y="7" width="1" height="1" fill="#fff"/><rect x="6" y="7" width="1" height="1" fill="#fff"/><rect x="7" y="7" width="1" height="1" fill="#fff"/><rect x="8" y="7" width="1" height="1" fill="#fff"/><rect x="9" y="7" width="1" height="1" fill="#fff"/><rect x="3" y="8" width="1" height="1" fill="#fff"/><rect x="4" y="8" width="1" height="1" fill="#fff"/><rect x="5" y="8" width="1" height="1" fill="#fff"/><rect x="6" y="8" width="1" height="1" fill="#fff"/><rect x="7" y="8" width="1" height="1" fill="#fff"/><rect x="8" y="8" width="1" height="1" fill="#fff"/><rect x="4" y="9" width="1" height="1" fill="#fff"/><rect x="5" y="9" width="1" height="1" fill="#fff"/><rect x="6" y="9" width="1" height="1" fill="#fff"/><rect x="7" y="9" width="1" height="1" fill="#fff"/><rect x="4" y="0" width="1" height="1" fill="#a0a0a0"/><rect x="5" y="0" width="1" height="1" fill="#a0a0a0"/><rect x="6" y="0" width="1" height="1" fill="#a0a0a0"/><rect x="7" y="0" width="1" height="1" fill="#a0a0a0"/><rect x="2" y="1" width="1" height="1" fill="#a0a0a0"/><rect x="3" y="1" width="1" height="1" fill="#a0a0a0"/><rect x="8" y="1" width="1" height="1" fill="#a0a0a0"/><rect x="9" y="1" width="1" height="1" fill="#a0a0a0"/><rect x="1" y="2" width="1" height="1" fill="#a0a0a0"/><rect x="1" y="3" width="1" height="1" fill="#a0a0a0"/><rect x="0" y="4" width="1" height="1" fill="#a0a0a0"/><rect x="0" y="5" width="1" height="1" fill="#a0a0a0"/><rect x="0" y="6" width="1" height="1" fill="#a0a0a0"/><rect x="0" y="7" width="1" height="1" fill="#a0a0a0"/><rect x="1" y="8" width="1" height="1" fill="#a0a0a0"/><rect x="1" y="9" width="1" height="1" fill="#a0a0a0"/><rect x="4" y="1" width="1" height="1" fill="#696969"/><rect x="5" y="1" width="1" height="1" fill="#696969"/><rect x="6" y="1" width="1" height="1" fill="#696969"/><rect x="7" y="1" width="1" height="1" fill="#696969"/><rect x="2" y="2" width="1" height="1" fill="#696969"/><rect x="3" y="2" width="1" height="1" fill="#696969"/><rect x="8" y="2" width="1" height="1" fill="#696969"/><rect x="9" y="2" width="1" height="1" fill="#696969"/><rect x="2" y="3" width="1" height="1" fill="#696969"/><rect x="1" y="4" width="1" height="1" fill="#696969"/><rect x="1" y="5" width="1" height="1" fill="#696969"/><rect x="1" y="6" width="1" height="1" fill="#696969"/><rect x="1" y="7" width="1" height="1" fill="#696969"/><rect x="2" y="8" width="1" height="1" fill="#696969"/><rect x="10" y="2" width="1" height="1" fill="#fff"/><rect x="10" y="3" width="1" height="1" fill="#fff"/><rect x="11" y="4" width="1" height="1" fill="#fff"/><rect x="11" y="5" width="1" height="1" fill="#fff"/><rect x="11" y="6" width="1" height="1" fill="#fff"/><rect x="11" y="7" width="1" height="1" fill="#fff"/><rect x="10" y="8" width="1" height="1" fill="#fff"/><rect x="10" y="9" width="1" height="1" fill="#fff"/><rect x="2" y="10" width="1" height="1" fill="#fff"/><rect x="3" y="10" width="1" height="1" fill="#fff"/><rect x="8" y="10" width="1" height="1" fill="#fff"/><rect x="9" y="10" width="1" height="1" fill="#fff"/><rect x="4" y="11" width="1" height="1" fill="#fff"/><rect x="5" y="11" width="1" height="1" fill="#fff"/><rect x="6" y="11" width="1" height="1" fill="#fff"/><rect x="7" y="11" width="1" height="1" fill="#fff"/><rect x="9" y="3" width="1" height="1" fill="#e3e3e3"/><rect x="10" y="4" width="1" height="1" fill="#e3e3e3"/><rect x="10" y="5" width="1" height="1" fill="#e3e3e3"/><rect x="10" y="6" width="1" height="1" fill="#e3e3e3"/><rect x="10" y="7" width="1" height="1" fill="#e3e3e3"/><rect x="9" y="8" width="1" height="1" fill="#e3e3e3"/><rect x="2" y="9" width="1" height="1" fill="#e3e3e3"/><rect x="3" y="9" width="1" height="1" fill="#e3e3e3"/><rect x="8" y="9" width="1" height="1" fill="#e3e3e3"/><rect x="9" y="9" width="1" height="1" fill="#e3e3e3"/><rect x="4" y="10" width="1" height="1" fill="#e3e3e3"/><rect x="5" y="10" width="1" height="1" fill="#e3e3e3"/><rect x="6" y="10" width="1" height="1" fill="#e3e3e3"/><rect x="7" y="10" width="1" height="1" fill="#e3e3e3"/><rect x="5" y="4" width="1" height="1" fill="#000"/><rect x="6" y="4" width="1" height="1" fill="#000"/><rect x="4" y="5" width="1" height="1" fill="#000"/><rect x="5" y="5" width="1" height="1" fill="#000"/><rect x="6" y="5" width="1" height="1" fill="#000"/><rect x="7" y="5" width="1" height="1" fill="#000"/><rect x="4" y="6" width="1" height="1" fill="#000"/><rect x="5" y="6" width="1" height="1" fill="#000"/><rect x="6" y="6" width="1" height="1" fill="#000"/><rect x="7" y="6" width="1" height="1" fill="#000"/><rect x="5" y="7" width="1" height="1" fill="#000"/><rect x="6" y="7" width="1" height="1" fill="#000"/></svg><svg class="rd" style="left:8px;top:491px" width="12" height="12" shape-rendering="crispEdges"><rect x="4" y="2" width="1" height="1" fill="#fff"/><rect x="5" y="2" width="1" height="1" fill="#fff"/><rect x="6" y="2" width="1" height="1" fill="#fff"/><rect x="7" y="2" width="1" height="1" fill="#fff"/><rect x="3" y="3" width="1" height="1" fill="#fff"/><rect x="4" y="3" width="1" height="1" fill="#fff"/><rect x="5" y="3" width="1" height="1" fill="#fff"/><rect x="6" y="3" width="1" height="1" fill="#fff"/><rect x="7" y="3" width="1" height="1" fill="#fff"/><rect x="8" y="3" width="1" height="1" fill="#fff"/><rect x="2" y="4" width="1" height="1" fill="#fff"/><rect x="3" y="4" width="1" height="1" fill="#fff"/><rect x="4" y="4" width="1" height="1" fill="#fff"/><rect x="5" y="4" width="1" height="1" fill="#fff"/><rect x="6" y="4" width="1" height="1" fill="#fff"/><rect x="7" y="4" width="1" height="1" fill="#fff"/><rect x="8" y="4" width="1" height="1" fill="#fff"/><rect x="9" y="4" width="1" height="1" fill="#fff"/><rect x="2" y="5" width="1" height="1" fill="#fff"/><rect x="3" y="5" width="1" height="1" fill="#fff"/><rect x="4" y="5" width="1" height="1" fill="#fff"/><rect x="5" y="5" width="1" height="1" fill="#fff"/><rect x="6" y="5" width="1" height="1" fill="#fff"/><rect x="7" y="5" width="1" height="1" fill="#fff"/><rect x="8" y="5" width="1" height="1" fill="#fff"/><rect x="9" y="5" width="1" height="1" fill="#fff"/><rect x="2" y="6" width="1" height="1" fill="#fff"/><rect x="3" y="6" width="1" height="1" fill="#fff"/><rect x="4" y="6" width="1" height="1" fill="#fff"/><rect x="5" y="6" width="1" height="1" fill="#fff"/><rect x="6" y="6" width="1" height="1" fill="#fff"/><rect x="7" y="6" width="1" height="1" fill="#fff"/><rect x="8" y="6" width="1" height="1" fill="#fff"/><rect x="9" y="6" width="1" height="1" fill="#fff"/><rect x="2" y="7" width="1" height="1" fill="#fff"/><rect x="3" y="7" width="1" height="1" fill="#fff"/><rect x="4" y="7" width="1" height="1" fill="#fff"/><rect x="5" y="7" width="1" height="1" fill="#fff"/><rect x="6" y="7" width="1" height="1" fill="#fff"/><rect x="7" y="7" width="1" height="1" fill="#fff"/><rect x="8" y="7" width="1" height="1" fill="#fff"/><rect x="9" y="7" width="1" height="1" fill="#fff"/><rect x="3" y="8" width="1" height="1" fill="#fff"/><rect x="4" y="8" width="1" height="1" fill="#fff"/><rect x="5" y="8" width="1" height="1" fill="#fff"/><rect x="6" y="8" width="1" height="1" fill="#fff"/><rect x="7" y="8" width="1" height="1" fill="#fff"/><rect x="8" y="8" width="1" height="1" fill="#fff"/><rect x="4" y="9" width="1" height="1" fill="#fff"/><rect x="5" y="9" width="1" height="1" fill="#fff"/><rect x="6" y="9" width="1" height="1" fill="#fff"/><rect x="7" y="9" width="1" height="1" fill="#fff"/><rect x="4" y="0" width="1" height="1" fill="#a0a0a0"/><rect x="5" y="0" width="1" height="1" fill="#a0a0a0"/><rect x="6" y="0" width="1" height="1" fill="#a0a0a0"/><rect x="7" y="0" width="1" height="1" fill="#a0a0a0"/><rect x="2" y="1" width="1" height="1" fill="#a0a0a0"/><rect x="3" y="1" width="1" height="1" fill="#a0a0a0"/><rect x="8" y="1" width="1" height="1" fill="#a0a0a0"/><rect x="9" y="1" width="1" height="1" fill="#a0a0a0"/><rect x="1" y="2" width="1" height="1" fill="#a0a0a0"/><rect x="1" y="3" width="1" height="1" fill="#a0a0a0"/><rect x="0" y="4" width="1" height="1" fill="#a0a0a0"/><rect x="0" y="5" width="1" height="1" fill="#a0a0a0"/><rect x="0" y="6" width="1" height="1" fill="#a0a0a0"/><rect x="0" y="7" width="1" height="1" fill="#a0a0a0"/><rect x="1" y="8" width="1" height="1" fill="#a0a0a0"/><rect x="1" y="9" width="1" height="1" fill="#a0a0a0"/><rect x="4" y="1" width="1" height="1" fill="#696969"/><rect x="5" y="1" width="1" height="1" fill="#696969"/><rect x="6" y="1" width="1" height="1" fill="#696969"/><rect x="7" y="1" width="1" height="1" fill="#696969"/><rect x="2" y="2" width="1" height="1" fill="#696969"/><rect x="3" y="2" width="1" height="1" fill="#696969"/><rect x="8" y="2" width="1" height="1" fill="#696969"/><rect x="9" y="2" width="1" height="1" fill="#696969"/><rect x="2" y="3" width="1" height="1" fill="#696969"/><rect x="1" y="4" width="1" height="1" fill="#696969"/><rect x="1" y="5" width="1" height="1" fill="#696969"/><rect x="1" y="6" width="1" height="1" fill="#696969"/><rect x="1" y="7" width="1" height="1" fill="#696969"/><rect x="2" y="8" width="1" height="1" fill="#696969"/><rect x="10" y="2" width="1" height="1" fill="#fff"/><rect x="10" y="3" width="1" height="1" fill="#fff"/><rect x="11" y="4" width="1" height="1" fill="#fff"/><rect x="11" y="5" width="1" height="1" fill="#fff"/><rect x="11" y="6" width="1" height="1" fill="#fff"/><rect x="11" y="7" width="1" height="1" fill="#fff"/><rect x="10" y="8" width="1" height="1" fill="#fff"/><rect x="10" y="9" width="1" height="1" fill="#fff"/><rect x="2" y="10" width="1" height="1" fill="#fff"/><rect x="3" y="10" width="1" height="1" fill="#fff"/><rect x="8" y="10" width="1" height="1" fill="#fff"/><rect x="9" y="10" width="1" height="1" fill="#fff"/><rect x="4" y="11" width="1" height="1" fill="#fff"/><rect x="5" y="11" width="1" height="1" fill="#fff"/><rect x="6" y="11" width="1" height="1" fill="#fff"/><rect x="7" y="11" width="1" height="1" fill="#fff"/><rect x="9" y="3" width="1" height="1" fill="#e3e3e3"/><rect x="10" y="4" width="1" height="1" fill="#e3e3e3"/><rect x="10" y="5" width="1" height="1" fill="#e3e3e3"/><rect x="10" y="6" width="1" height="1" fill="#e3e3e3"/><rect x="10" y="7" width="1" height="1" fill="#e3e3e3"/><rect x="9" y="8" width="1" height="1" fill="#e3e3e3"/><rect x="2" y="9" width="1" height="1" fill="#e3e3e3"/><rect x="3" y="9" width="1" height="1" fill="#e3e3e3"/><rect x="8" y="9" width="1" height="1" fill="#e3e3e3"/><rect x="9" y="9" width="1" height="1" fill="#e3e3e3"/><rect x="4" y="10" width="1" height="1" fill="#e3e3e3"/><rect x="5" y="10" width="1" height="1" fill="#e3e3e3"/><rect x="6" y="10" width="1" height="1" fill="#e3e3e3"/><rect x="7" y="10" width="1" height="1" fill="#e3e3e3"/></svg><div class="cb" style="left:8px;top:161px"><svg width="13" height="13" style="position:absolute;left:0;top:0"><g fill="#000"><rect x="8" y="2" width="1" height="1"/><rect x="7" y="3" width="2" height="1"/><rect x="2" y="4" width="1" height="1"/><rect x="6" y="4" width="3" height="1"/><rect x="2" y="5" width="2" height="1"/><rect x="5" y="5" width="3" height="1"/><rect x="2" y="6" width="5" height="1"/><rect x="3" y="7" width="3" height="1"/><rect x="4" y="8" width="1" height="1"/></g></svg></div><div class="cb" style="left:8px;top:181px"><svg width="13" height="13" style="position:absolute;left:0;top:0"><g fill="#000"><rect x="8" y="2" width="1" height="1"/><rect x="7" y="3" width="2" height="1"/><rect x="2" y="4" width="1" height="1"/><rect x="6" y="4" width="3" height="1"/><rect x="2" y="5" width="2" height="1"/><rect x="5" y="5" width="3" height="1"/><rect x="2" y="6" width="5" height="1"/><rect x="3" y="7" width="3" height="1"/><rect x="4" y="8" width="1" height="1"/></g></svg></div><div class="cb" style="left:8px;top:201px"><svg width="13" height="13" style="position:absolute;left:0;top:0"><g fill="#000"><rect x="8" y="2" width="1" height="1"/><rect x="7" y="3" width="2" height="1"/><rect x="2" y="4" width="1" height="1"/><rect x="6" y="4" width="3" height="1"/><rect x="2" y="5" width="2" height="1"/><rect x="5" y="5" width="3" height="1"/><rect x="2" y="6" width="5" height="1"/><rect x="3" y="7" width="3" height="1"/><rect x="4" y="8" width="1" height="1"/></g></svg></div><div class="cb" style="left:8px;top:221px"><svg width="13" height="13" style="position:absolute;left:0;top:0"><g fill="#000"><rect x="8" y="2" width="1" height="1"/><rect x="7" y="3" width="2" height="1"/><rect x="2" y="4" width="1" height="1"/><rect x="6" y="4" width="3" height="1"/><rect x="2" y="5" width="2" height="1"/><rect x="5" y="5" width="3" height="1"/><rect x="2" y="6" width="5" height="1"/><rect x="3" y="7" width="3" height="1"/><rect x="4" y="8" width="1" height="1"/></g></svg></div><div class="cb" style="left:8px;top:241px"><svg width="13" height="13" style="position:absolute;left:0;top:0"><g fill="#000"><rect x="8" y="2" width="1" height="1"/><rect x="7" y="3" width="2" height="1"/><rect x="2" y="4" width="1" height="1"/><rect x="6" y="4" width="3" height="1"/><rect x="2" y="5" width="2" height="1"/><rect x="5" y="5" width="3" height="1"/><rect x="2" y="6" width="5" height="1"/><rect x="3" y="7" width="3" height="1"/><rect x="4" y="8" width="1" height="1"/></g></svg></div><div class="b" style="left:90px;top:32px;width:45px;height:20px"></div><div class="b" style="left:90px;top:52px;width:45px;height:20px"></div><div class="b" style="left:90px;top:72px;width:45px;height:20px"></div><div class="b" style="left:17px;top:270px;width:100px;height:30px"></div><div class="b" style="left:157px;top:370px;width:30px;height:20px"></div><div class="g" style="left:169px;top:379px;width:6px;height:1px"></div><div class="g" style="left:171px;top:376px;width:2px;height:7px"></div><div class="b" style="left:157px;top:430px;width:30px;height:20px"></div><div class="g" style="left:170px;top:439px;width:4px;height:1px"></div><div class="b" style="left:347px;top:370px;width:20px;height:15px"></div><div class="g" style="left:355px;top:377px;width:4px;height:1px"></div><div class="b" style="left:369px;top:370px;width:20px;height:15px"></div><div class="g" style="left:376px;top:377px;width:6px;height:1px"></div><div class="g" style="left:378px;top:374px;width:2px;height:7px"></div><div class="b" style="left:347px;top:395px;width:20px;height:15px"></div><div class="g" style="left:355px;top:402px;width:4px;height:1px"></div><div class="b" style="left:369px;top:395px;width:20px;height:15px"></div><div class="g" style="left:376px;top:402px;width:6px;height:1px"></div><div class="g" style="left:378px;top:399px;width:2px;height:7px"></div><div class="b" style="left:347px;top:420px;width:20px;height:15px"></div><div class="g" style="left:355px;top:427px;width:4px;height:1px"></div><div class="b" style="left:369px;top:420px;width:20px;height:15px"></div><div class="g" style="left:376px;top:427px;width:6px;height:1px"></div><div class="g" style="left:378px;top:424px;width:2px;height:7px"></div><div class="b" style="left:347px;top:445px;width:20px;height:15px"></div><div class="g" style="left:355px;top:452px;width:4px;height:1px"></div><div class="b" style="left:369px;top:445px;width:20px;height:15px"></div><div class="g" style="left:376px;top:452px;width:6px;height:1px"></div><div class="g" style="left:378px;top:449px;width:2px;height:7px"></div><div class="b" style="left:347px;top:470px;width:20px;height:15px"></div><div class="g" style="left:355px;top:477px;width:4px;height:1px"></div><div class="b" style="left:369px;top:470px;width:20px;height:15px"></div><div class="g" style="left:376px;top:477px;width:6px;height:1px"></div><div class="g" style="left:378px;top:474px;width:2px;height:7px"></div><div class="b" style="left:612px;top:370px;width:20px;height:15px"></div><div class="g" style="left:620px;top:377px;width:4px;height:1px"></div><div class="b" style="left:634px;top:370px;width:20px;height:15px"></div><div class="g" style="left:641px;top:377px;width:6px;height:1px"></div><div class="g" style="left:643px;top:374px;width:2px;height:7px"></div><div class="b" style="left:612px;top:395px;width:20px;height:15px"></div><div class="g" style="left:620px;top:402px;width:4px;height:1px"></div><div class="b" style="left:634px;top:395px;width:20px;height:15px"></div><div class="g" style="left:641px;top:402px;width:6px;height:1px"></div><div class="g" style="left:643px;top:399px;width:2px;height:7px"></div><div class="b" style="left:612px;top:420px;width:20px;height:15px"></div><div class="g" style="left:620px;top:427px;width:4px;height:1px"></div><div class="b" style="left:634px;top:420px;width:20px;height:15px"></div><div class="g" style="left:641px;top:427px;width:6px;height:1px"></div><div class="g" style="left:643px;top:424px;width:2px;height:7px"></div><div class="b" style="left:612px;top:445px;width:20px;height:15px"></div><div class="g" style="left:620px;top:452px;width:4px;height:1px"></div><div class="b" style="left:634px;top:445px;width:20px;height:15px"></div><div class="g" style="left:641px;top:452px;width:6px;height:1px"></div><div class="g" style="left:643px;top:449px;width:2px;height:7px"></div><div class="b" style="left:885px;top:370px;width:20px;height:15px"></div><div class="g" style="left:893px;top:377px;width:4px;height:1px"></div><div class="b" style="left:907px;top:370px;width:20px;height:15px"></div><div class="g" style="left:914px;top:377px;width:6px;height:1px"></div><div class="g" style="left:916px;top:374px;width:2px;height:7px"></div><div class="b" style="left:885px;top:395px;width:20px;height:15px"></div><div class="g" style="left:893px;top:402px;width:4px;height:1px"></div><div class="b" style="left:907px;top:395px;width:20px;height:15px"></div><div class="g" style="left:914px;top:402px;width:6px;height:1px"></div><div class="g" style="left:916px;top:399px;width:2px;height:7px"></div><div class="b" style="left:885px;top:420px;width:20px;height:15px"></div><div class="g" style="left:893px;top:427px;width:4px;height:1px"></div><div class="b" style="left:907px;top:420px;width:20px;height:15px"></div><div class="g" style="left:914px;top:427px;width:6px;height:1px"></div><div class="g" style="left:916px;top:424px;width:2px;height:7px"></div><div class="b" style="left:157px;top:518px;width:50px;height:25px"></div><div class="b" style="left:207px;top:518px;width:50px;height:25px"></div><div class="b" style="left:290px;top:518px;width:50px;height:25px"></div><div class="b" style="left:340px;top:518px;width:50px;height:25px"></div><div class="b" style="left:963px;top:109px;width:20px;height:15px"></div><div class="g" style="left:971px;top:116px;width:4px;height:1px"></div><div class="b" style="left:963px;top:173px;width:20px;height:15px"></div><div class="g" style="left:971px;top:180px;width:4px;height:1px"></div><div class="b" style="left:963px;top:237px;width:20px;height:15px"></div><div class="g" style="left:971px;top:244px;width:4px;height:1px"></div><div class="t" id="motor1" style="left:26px;top:35px;font-weight:bold;letter-spacing:-0.750px">Motor 1</div><div class="t" id="motor2" style="left:26px;top:55px;font-weight:bold;letter-spacing:-0.750px">Motor 2</div><div class="t" id="motor3" style="left:26px;top:75px;font-weight:bold;letter-spacing:-0.750px">Motor 3</div><div class="t" id="display" style="left:7px;top:141px;font-weight:bold;letter-spacing:0.143px">Display:</div><div class="t" id="target" style="left:27px;top:160px;font-weight:bold;letter-spacing:-0.200px">Target</div><div class="t" id="feedback" style="left:26px;top:180px;font-weight:bold;letter-spacing:-0.143px">Feedback</div><div class="t" id="pwm" style="left:26px;top:200px;font-weight:bold;letter-spacing:1.000px">PWM</div><div class="t" id="motorlimits" style="left:26px;top:220px;font-weight:bold;letter-spacing:-0.409px">Motor Limits</div><div class="t" id="inputclip" style="left:26px;top:240px;font-weight:bold;letter-spacing:-0.423px">Input Clipping</div><div class="t" id="outmode" style="left:7px;top:351px;font-weight:bold;letter-spacing:-0.437px">Out Mode:</div><div class="t" id="monitor" style="left:26px;top:370px;font-weight:bold;letter-spacing:-0.333px">Monitor</div><div class="t" id="square" style="left:26px;top:390px;font-weight:bold;letter-spacing:-0.400px">Square</div><div class="t" id="triangle" style="left:27px;top:410px;font-weight:bold;letter-spacing:-0.286px">Triangle</div><div class="t" id="sine" style="left:26px;top:430px;font-weight:bold;letter-spacing:-0.333px">Sine</div><div class="t" id="motion" style="left:26px;top:450px;font-weight:bold;letter-spacing:-0.200px">Motion</div><div class="t" id="manual" style="left:26px;top:470px;font-weight:bold;letter-spacing:0.000px">Manual</div><div class="t" id="udp" style="left:26px;top:490px;font-weight:bold;letter-spacing:-0.333px">UDP Pass thru</div><div class="t" id="pks" style="left:27px;top:511px;font-weight:bold;letter-spacing:-0.400px">pks/sec = 0</div><div class="t" id="step" style="left:157px;top:391px;font-weight:bold;letter-spacing:-0.700px">Step</div><div class="t" id="one" style="left:166px;top:411px;font-weight:bold;letter-spacing:0.000px">1</div><div class="t" id="fpid" style="left:262px;top:371px;font-weight:bold;letter-spacing:-0.857px">Fpid / 1</div><div class="t" id="kp" style="left:262px;top:396px;font-weight:bold;letter-spacing:-0.571px">Kp = 210</div><div class="t" id="ki" style="left:262px;top:421px;font-weight:bold;letter-spacing:-0.600px">Ki = 0</div><div class="t" id="kd" style="left:262px;top:446px;font-weight:bold;letter-spacing:-0.800px">Kd = 0</div><div class="t" id="ks" style="left:262px;top:471px;font-weight:bold;letter-spacing:-1.000px">Ks = 1</div><div class="t" id="fpwm" style="left:482px;top:371px;font-weight:bold;letter-spacing:-0.363px">Fpwm = 25kHz</div><div class="t" id="pwmmin" style="left:482px;top:396px;font-weight:bold;letter-spacing:-0.334px">PWMmin = 0</div><div class="t" id="pwmmax" style="left:482px;top:421px;font-weight:bold;letter-spacing:-0.090px">PWMmax = 110</div><div class="t" id="pwmrev" style="left:482px;top:446px;font-weight:bold;letter-spacing:-0.100px">PWMrev = 10</div><div class="t" id="tx" style="left:482px;top:496px;font-weight:normal;letter-spacing:-0.393px;-webkit-text-stroke:0.35px #000">Tx: [ A 02 00 ]</div><div class="t" id="rx" style="left:482px;top:521px;font-weight:normal;letter-spacing:-0.393px;-webkit-text-stroke:0.35px #000">Rx: [ a 10 3C ]</div><div class="t" id="calcs" style="left:482px;top:546px;font-weight:bold;letter-spacing:-0.200px">Calcs/sec = 3976</div><div class="t" id="maxlim" style="left:747px;top:371px;font-weight:bold;letter-spacing:-0.346px">Max Limits = 5</div><div class="t" id="clip" style="left:747px;top:396px;font-weight:bold;letter-spacing:-0.433px">Clip Input = 255</div><div class="t" id="dead" style="left:747px;top:421px;font-weight:bold;letter-spacing:-0.181px">Deadzone = 0</div><div class="t" id="ard" style="left:746px;top:471px;font-weight:bold;letter-spacing:-0.425px">Arduino SMC3 ver 1.00</div><div class="t" id="winu" style="left:747px;top:496px;font-weight:bold;letter-spacing:-0.326px">Windows Utility ver 1.01</div><div class="t" id="udpport" style="left:747px;top:521px;font-weight:bold;letter-spacing:-0.308px">UDP Port 20017</div><div class="t" id="comm" style="left:747px;top:546px;font-weight:bold;letter-spacing:-0.700px">Comm Port 4</div><div class="t" id="smc3" style="left:190px;top:546px;font-weight:bold;letter-spacing:-0.369px">SMC3 settings loaded</div><div class="t" id="on1" style="left:102px;top:34px;font-weight:bold;letter-spacing:0.000px">ON</div><div class="t" id="on2" style="left:102px;top:54px;font-weight:bold;letter-spacing:0.000px">ON</div><div class="t" id="on3" style="left:102px;top:74px;font-weight:bold;letter-spacing:0.000px">ON</div><div class="t" id="saveimg" style="left:28px;top:277px;font-weight:bold;letter-spacing:-0.278px">Save Image</div><div class="t" id="save" style="left:165px;top:523px;font-weight:bold;letter-spacing:0.000px">Save</div><div class="t" id="load" style="left:215px;top:523px;font-weight:bold;letter-spacing:-0.333px">Load</div><div class="t" id="m2" style="left:296px;top:523px;font-weight:bold;letter-spacing:0.000px"><span style="font-weight:normal">-&gt;</span> M2</div><div class="t" id="m3" style="left:346px;top:523px;font-weight:bold;letter-spacing:0.000px"><span style="font-weight:normal">-&gt;</span> M3</div><div id="focus" style="position:absolute;left:25px;top:450px;width:44px;height:14px;border-left:1px dotted #000;border-right:1px dotted #000"></div>
</body></html>
